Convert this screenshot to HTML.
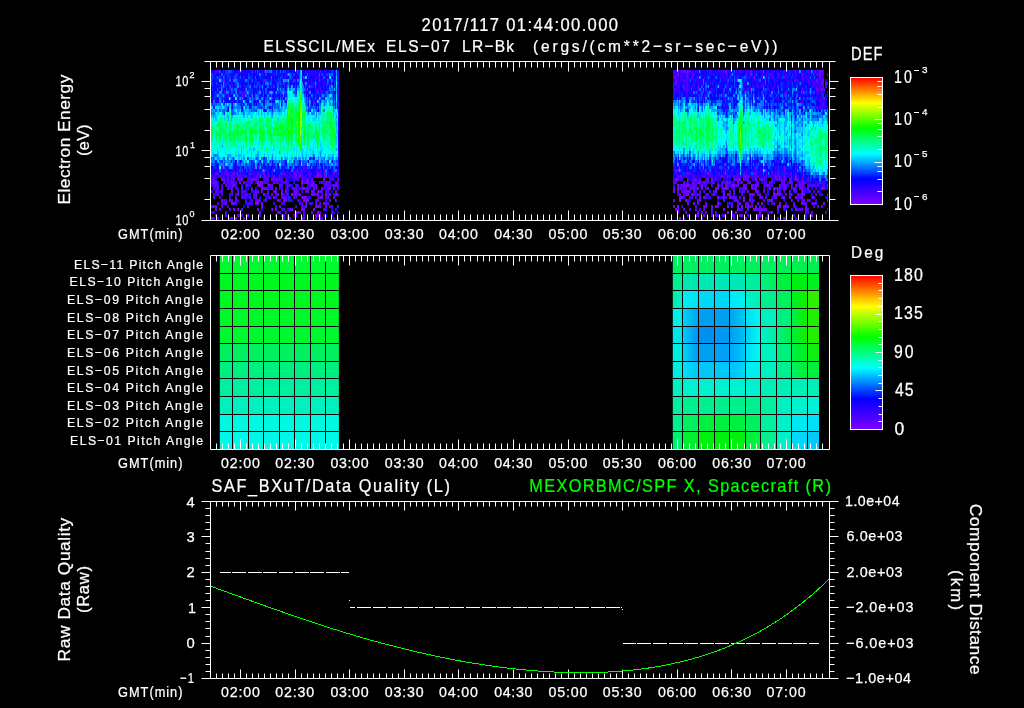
<!DOCTYPE html>
<html><head><meta charset="utf-8"><style>
html,body{margin:0;padding:0;background:#000;}
#w{position:relative;width:1024px;height:708px;overflow:hidden;background:#000;}
.fb{position:absolute;}
</style></head><body><div id="w">
<div class="fb" style="left:211px;top:70px;width:128px;height:150px;background:linear-gradient(rgb(16,24,255) 2.0%,rgb(12,32,255) 6.0%,rgb(11,36,253) 10.0%,rgb(9,53,252) 14.0%,rgb(8,73,246) 18.0%,rgb(8,100,242) 22.0%,rgb(3,146,228) 26.0%,rgb(3,211,204) 30.0%,rgb(2,246,163) 34.0%,rgb(3,252,114) 38.0%,rgb(4,252,82) 42.0%,rgb(2,251,112) 46.0%,rgb(1,250,171) 50.0%,rgb(0,244,211) 54.0%,rgb(0,222,245) 58.0%,rgb(0,111,253) 62.0%,rgb(12,41,254) 66.0%,rgb(51,4,255) 70.0%,rgb(57,0,183) 74.0%,rgb(55,0,171) 78.0%,rgb(47,0,143) 82.0%,rgb(44,0,139) 86.0%,rgb(36,0,107) 90.0%,rgb(33,0,87) 94.0%,rgb(28,0,79) 98.0%)"></div><div class="fb" style="left:673px;top:70px;width:155px;height:150px;background:linear-gradient(rgb(42,7,248) 2.0%,rgb(31,16,248) 6.0%,rgb(28,14,253) 10.0%,rgb(24,25,250) 14.0%,rgb(12,35,253) 18.0%,rgb(6,60,253) 22.0%,rgb(5,102,251) 26.0%,rgb(0,174,234) 30.0%,rgb(0,214,207) 34.0%,rgb(0,236,188) 38.0%,rgb(0,242,167) 42.0%,rgb(0,248,168) 46.0%,rgb(0,242,184) 50.0%,rgb(0,229,215) 54.0%,rgb(0,161,244) 58.0%,rgb(3,100,246) 62.0%,rgb(14,53,252) 66.0%,rgb(32,27,254) 70.0%,rgb(55,4,212) 74.0%,rgb(65,0,192) 78.0%,rgb(45,0,134) 82.0%,rgb(47,0,133) 86.0%,rgb(35,0,95) 90.0%,rgb(37,0,100) 94.0%,rgb(27,0,72) 98.0%)"></div><canvas id="c" width="1024" height="708" style="position:absolute;left:0;top:0"></canvas><svg width="1024" height="708" style="position:absolute;left:0;top:0" font-family='"Liberation Sans", sans-serif'>
<defs><linearGradient id="pr0" gradientUnits="objectBoundingBox" x1="0" y1="0" x2="1" y2="0"><stop offset="0.0103" stop-color="#00f060"/><stop offset="0.0554" stop-color="#00f060"/><stop offset="0.0759" stop-color="#00f060"/><stop offset="0.1635" stop-color="#00f060"/><stop offset="0.1840" stop-color="#00f060"/><stop offset="0.2736" stop-color="#00f060"/><stop offset="0.2941" stop-color="#00f060"/><stop offset="0.3769" stop-color="#00f060"/><stop offset="0.3974" stop-color="#00f060"/><stop offset="0.4870" stop-color="#00f060"/><stop offset="0.5075" stop-color="#00f060"/><stop offset="0.5889" stop-color="#00f060"/><stop offset="0.6094" stop-color="#00f060"/><stop offset="0.6970" stop-color="#00f060"/><stop offset="0.7175" stop-color="#00f058"/><stop offset="0.8016" stop-color="#00f058"/><stop offset="0.8222" stop-color="#00f050"/><stop offset="0.9104" stop-color="#00f050"/><stop offset="0.9309" stop-color="#00f050"/><stop offset="0.9897" stop-color="#00f050"/></linearGradient><linearGradient id="pr1" gradientUnits="objectBoundingBox" x1="0" y1="0" x2="1" y2="0"><stop offset="0.0103" stop-color="#00f090"/><stop offset="0.0554" stop-color="#00f090"/><stop offset="0.0759" stop-color="#00e8b0"/><stop offset="0.1635" stop-color="#00e8b0"/><stop offset="0.1840" stop-color="#00e8b8"/><stop offset="0.2736" stop-color="#00e8b8"/><stop offset="0.2941" stop-color="#00e8b8"/><stop offset="0.3769" stop-color="#00e8b8"/><stop offset="0.3974" stop-color="#00e8b8"/><stop offset="0.4870" stop-color="#00e8b8"/><stop offset="0.5075" stop-color="#00f0a0"/><stop offset="0.5889" stop-color="#00f0a0"/><stop offset="0.6094" stop-color="#00f080"/><stop offset="0.6970" stop-color="#00f060"/><stop offset="0.7175" stop-color="#00f040"/><stop offset="0.8016" stop-color="#00f040"/><stop offset="0.8222" stop-color="#00f010"/><stop offset="0.9104" stop-color="#00f010"/><stop offset="0.9309" stop-color="#00f020"/><stop offset="0.9897" stop-color="#00f020"/></linearGradient><linearGradient id="pr2" gradientUnits="objectBoundingBox" x1="0" y1="0" x2="1" y2="0"><stop offset="0.0103" stop-color="#00f0a0"/><stop offset="0.0554" stop-color="#00f0d0"/><stop offset="0.0759" stop-color="#00f0f0"/><stop offset="0.1635" stop-color="#00e0f8"/><stop offset="0.1840" stop-color="#00d8f8"/><stop offset="0.2736" stop-color="#00d8f8"/><stop offset="0.2941" stop-color="#00d8f8"/><stop offset="0.3769" stop-color="#00d8f8"/><stop offset="0.3974" stop-color="#00e8f8"/><stop offset="0.4870" stop-color="#00f0f0"/><stop offset="0.5075" stop-color="#00f0d0"/><stop offset="0.5889" stop-color="#00f0b0"/><stop offset="0.6094" stop-color="#00f090"/><stop offset="0.6970" stop-color="#00f090"/><stop offset="0.7175" stop-color="#00f060"/><stop offset="0.8016" stop-color="#00f060"/><stop offset="0.8222" stop-color="#00f020"/><stop offset="0.9104" stop-color="#10f000"/><stop offset="0.9309" stop-color="#30f000"/><stop offset="0.9897" stop-color="#30f000"/></linearGradient><linearGradient id="pr3" gradientUnits="objectBoundingBox" x1="0" y1="0" x2="1" y2="0"><stop offset="0.0103" stop-color="#00f0e0"/><stop offset="0.0554" stop-color="#00f0f0"/><stop offset="0.0759" stop-color="#00d0f8"/><stop offset="0.1635" stop-color="#00a8f0"/><stop offset="0.1840" stop-color="#00a0f0"/><stop offset="0.2736" stop-color="#00a0f0"/><stop offset="0.2941" stop-color="#00a0f0"/><stop offset="0.3769" stop-color="#00a0f0"/><stop offset="0.3974" stop-color="#00a8f0"/><stop offset="0.4870" stop-color="#00c8f0"/><stop offset="0.5075" stop-color="#00e0f0"/><stop offset="0.5889" stop-color="#00f8f0"/><stop offset="0.6094" stop-color="#00f0c0"/><stop offset="0.6970" stop-color="#00f0c0"/><stop offset="0.7175" stop-color="#00f080"/><stop offset="0.8016" stop-color="#00f080"/><stop offset="0.8222" stop-color="#00f040"/><stop offset="0.9104" stop-color="#10f000"/><stop offset="0.9309" stop-color="#20f000"/><stop offset="0.9897" stop-color="#20f000"/></linearGradient><linearGradient id="pr4" gradientUnits="objectBoundingBox" x1="0" y1="0" x2="1" y2="0"><stop offset="0.0103" stop-color="#00e8e8"/><stop offset="0.0554" stop-color="#00e8e8"/><stop offset="0.0759" stop-color="#00c8f8"/><stop offset="0.1635" stop-color="#0098f0"/><stop offset="0.1840" stop-color="#0090f0"/><stop offset="0.2736" stop-color="#0090f0"/><stop offset="0.2941" stop-color="#0098f0"/><stop offset="0.3769" stop-color="#0098f0"/><stop offset="0.3974" stop-color="#00a0f0"/><stop offset="0.4870" stop-color="#00c0f0"/><stop offset="0.5075" stop-color="#00d0f0"/><stop offset="0.5889" stop-color="#00f8f0"/><stop offset="0.6094" stop-color="#00f0d0"/><stop offset="0.6970" stop-color="#00f0a0"/><stop offset="0.7175" stop-color="#00f080"/><stop offset="0.8016" stop-color="#00f050"/><stop offset="0.8222" stop-color="#00f030"/><stop offset="0.9104" stop-color="#10f000"/><stop offset="0.9309" stop-color="#20f000"/><stop offset="0.9897" stop-color="#20f000"/></linearGradient><linearGradient id="pr5" gradientUnits="objectBoundingBox" x1="0" y1="0" x2="1" y2="0"><stop offset="0.0103" stop-color="#00f0e0"/><stop offset="0.0554" stop-color="#00f0e0"/><stop offset="0.0759" stop-color="#00d0f8"/><stop offset="0.1635" stop-color="#00a0f0"/><stop offset="0.1840" stop-color="#00a0f0"/><stop offset="0.2736" stop-color="#00a0f0"/><stop offset="0.2941" stop-color="#00a0f8"/><stop offset="0.3769" stop-color="#00a0f8"/><stop offset="0.3974" stop-color="#00a8f8"/><stop offset="0.4870" stop-color="#00c8f8"/><stop offset="0.5075" stop-color="#00e0f8"/><stop offset="0.5889" stop-color="#00f8f0"/><stop offset="0.6094" stop-color="#00f0c0"/><stop offset="0.6970" stop-color="#00f0c0"/><stop offset="0.7175" stop-color="#00f080"/><stop offset="0.8016" stop-color="#00f080"/><stop offset="0.8222" stop-color="#00f040"/><stop offset="0.9104" stop-color="#00f020"/><stop offset="0.9309" stop-color="#10f010"/><stop offset="0.9897" stop-color="#10f010"/></linearGradient><linearGradient id="pr6" gradientUnits="objectBoundingBox" x1="0" y1="0" x2="1" y2="0"><stop offset="0.0103" stop-color="#00f0e0"/><stop offset="0.0554" stop-color="#00f0e0"/><stop offset="0.0759" stop-color="#00e0f8"/><stop offset="0.1635" stop-color="#00c8f8"/><stop offset="0.1840" stop-color="#00c8f8"/><stop offset="0.2736" stop-color="#00c8f8"/><stop offset="0.2941" stop-color="#00c8f8"/><stop offset="0.3769" stop-color="#00c8f8"/><stop offset="0.3974" stop-color="#00c0f8"/><stop offset="0.4870" stop-color="#00d8f8"/><stop offset="0.5075" stop-color="#00f0f0"/><stop offset="0.5889" stop-color="#00f0f0"/><stop offset="0.6094" stop-color="#00f0c0"/><stop offset="0.6970" stop-color="#00f0c0"/><stop offset="0.7175" stop-color="#00f090"/><stop offset="0.8016" stop-color="#00f090"/><stop offset="0.8222" stop-color="#00f060"/><stop offset="0.9104" stop-color="#00f030"/><stop offset="0.9309" stop-color="#00f040"/><stop offset="0.9897" stop-color="#00f040"/></linearGradient><linearGradient id="pr7" gradientUnits="objectBoundingBox" x1="0" y1="0" x2="1" y2="0"><stop offset="0.0103" stop-color="#00f0c0"/><stop offset="0.0554" stop-color="#00f0c0"/><stop offset="0.0759" stop-color="#00f0d0"/><stop offset="0.1635" stop-color="#00f0d0"/><stop offset="0.1840" stop-color="#00f0d0"/><stop offset="0.2736" stop-color="#00f0d0"/><stop offset="0.2941" stop-color="#00f0d0"/><stop offset="0.3769" stop-color="#00f0d0"/><stop offset="0.3974" stop-color="#00f0d0"/><stop offset="0.4870" stop-color="#00f0d0"/><stop offset="0.5075" stop-color="#00f0d0"/><stop offset="0.5889" stop-color="#00f0d0"/><stop offset="0.6094" stop-color="#00f0b8"/><stop offset="0.6970" stop-color="#00f0b8"/><stop offset="0.7175" stop-color="#00f0b8"/><stop offset="0.8016" stop-color="#00f0b8"/><stop offset="0.8222" stop-color="#00f0b8"/><stop offset="0.9104" stop-color="#00f0b8"/><stop offset="0.9309" stop-color="#00f0b8"/><stop offset="0.9897" stop-color="#00f0b8"/></linearGradient><linearGradient id="pr8" gradientUnits="objectBoundingBox" x1="0" y1="0" x2="1" y2="0"><stop offset="0.0103" stop-color="#00f0a0"/><stop offset="0.0554" stop-color="#00f0a0"/><stop offset="0.0759" stop-color="#00f090"/><stop offset="0.1635" stop-color="#00f090"/><stop offset="0.1840" stop-color="#00f090"/><stop offset="0.2736" stop-color="#00f090"/><stop offset="0.2941" stop-color="#00f090"/><stop offset="0.3769" stop-color="#00f090"/><stop offset="0.3974" stop-color="#00f090"/><stop offset="0.4870" stop-color="#00f090"/><stop offset="0.5075" stop-color="#00f090"/><stop offset="0.5889" stop-color="#00f090"/><stop offset="0.6094" stop-color="#00f0a0"/><stop offset="0.6970" stop-color="#00f0a0"/><stop offset="0.7175" stop-color="#00f0c0"/><stop offset="0.8016" stop-color="#00f0c0"/><stop offset="0.8222" stop-color="#00f0d0"/><stop offset="0.9104" stop-color="#00f0d0"/><stop offset="0.9309" stop-color="#00f0d8"/><stop offset="0.9897" stop-color="#00f0d8"/></linearGradient><linearGradient id="pr9" gradientUnits="objectBoundingBox" x1="0" y1="0" x2="1" y2="0"><stop offset="0.0103" stop-color="#00f090"/><stop offset="0.0554" stop-color="#00f090"/><stop offset="0.0759" stop-color="#00f060"/><stop offset="0.1635" stop-color="#00f060"/><stop offset="0.1840" stop-color="#00f040"/><stop offset="0.2736" stop-color="#00f040"/><stop offset="0.2941" stop-color="#00f040"/><stop offset="0.3769" stop-color="#00f040"/><stop offset="0.3974" stop-color="#00f040"/><stop offset="0.4870" stop-color="#00f040"/><stop offset="0.5075" stop-color="#00f060"/><stop offset="0.5889" stop-color="#00f060"/><stop offset="0.6094" stop-color="#00f0a0"/><stop offset="0.6970" stop-color="#00f0a0"/><stop offset="0.7175" stop-color="#00f0c8"/><stop offset="0.8016" stop-color="#00f0c8"/><stop offset="0.8222" stop-color="#00e8f0"/><stop offset="0.9104" stop-color="#00e8f0"/><stop offset="0.9309" stop-color="#00e0f8"/><stop offset="0.9897" stop-color="#00e0f8"/></linearGradient><linearGradient id="pr10" gradientUnits="objectBoundingBox" x1="0" y1="0" x2="1" y2="0"><stop offset="0.0103" stop-color="#00f070"/><stop offset="0.0554" stop-color="#00f070"/><stop offset="0.0759" stop-color="#00f030"/><stop offset="0.1635" stop-color="#00f030"/><stop offset="0.1840" stop-color="#00f010"/><stop offset="0.2736" stop-color="#00f010"/><stop offset="0.2941" stop-color="#00f010"/><stop offset="0.3769" stop-color="#00f010"/><stop offset="0.3974" stop-color="#00f010"/><stop offset="0.4870" stop-color="#00f010"/><stop offset="0.5075" stop-color="#00f040"/><stop offset="0.5889" stop-color="#00f040"/><stop offset="0.6094" stop-color="#00f090"/><stop offset="0.6970" stop-color="#00f090"/><stop offset="0.7175" stop-color="#00f0c8"/><stop offset="0.8016" stop-color="#00f0c8"/><stop offset="0.8222" stop-color="#00d8f8"/><stop offset="0.9104" stop-color="#00d8f8"/><stop offset="0.9309" stop-color="#00c8f8"/><stop offset="0.9897" stop-color="#00c8f8"/></linearGradient></defs><rect x="219.8" y="255.50" width="119.1" height="17.64" fill="#00fa30"/><rect x="672.8" y="255.50" width="146.2" height="17.64" fill="url(#pr0)"/><rect x="219.8" y="273.14" width="119.1" height="17.64" fill="#00f820"/><rect x="672.8" y="273.14" width="146.2" height="17.64" fill="url(#pr1)"/><rect x="219.8" y="290.77" width="119.1" height="17.64" fill="#00f820"/><rect x="672.8" y="290.77" width="146.2" height="17.64" fill="url(#pr2)"/><rect x="219.8" y="308.41" width="119.1" height="17.64" fill="#00f828"/><rect x="672.8" y="308.41" width="146.2" height="17.64" fill="url(#pr3)"/><rect x="219.8" y="326.05" width="119.1" height="17.64" fill="#00f830"/><rect x="672.8" y="326.05" width="146.2" height="17.64" fill="url(#pr4)"/><rect x="219.8" y="343.68" width="119.1" height="17.64" fill="#00f060"/><rect x="672.8" y="343.68" width="146.2" height="17.64" fill="url(#pr5)"/><rect x="219.8" y="361.32" width="119.1" height="17.64" fill="#00f080"/><rect x="672.8" y="361.32" width="146.2" height="17.64" fill="url(#pr6)"/><rect x="219.8" y="378.95" width="119.1" height="17.64" fill="#00f0a0"/><rect x="672.8" y="378.95" width="146.2" height="17.64" fill="url(#pr7)"/><rect x="219.8" y="396.59" width="119.1" height="17.64" fill="#00f0c0"/><rect x="672.8" y="396.59" width="146.2" height="17.64" fill="url(#pr8)"/><rect x="219.8" y="414.23" width="119.1" height="17.64" fill="#00f8e0"/><rect x="672.8" y="414.23" width="146.2" height="17.64" fill="url(#pr9)"/><rect x="219.8" y="431.86" width="119.1" height="17.64" fill="#00f8e8"/><rect x="672.8" y="431.86" width="146.2" height="17.64" fill="url(#pr10)"/><line x1="232.5" y1="255.5" x2="232.5" y2="449.5" stroke="#000"/><line x1="248.5" y1="255.5" x2="248.5" y2="449.5" stroke="#000"/><line x1="263.5" y1="255.5" x2="263.5" y2="449.5" stroke="#000"/><line x1="279.5" y1="255.5" x2="279.5" y2="449.5" stroke="#000"/><line x1="294.5" y1="255.5" x2="294.5" y2="449.5" stroke="#000"/><line x1="310.5" y1="255.5" x2="310.5" y2="449.5" stroke="#000"/><line x1="325.5" y1="255.5" x2="325.5" y2="449.5" stroke="#000"/><line x1="682.5" y1="255.5" x2="682.5" y2="449.5" stroke="#000"/><line x1="698.5" y1="255.5" x2="698.5" y2="449.5" stroke="#000"/><line x1="714.5" y1="255.5" x2="714.5" y2="449.5" stroke="#000"/><line x1="729.5" y1="255.5" x2="729.5" y2="449.5" stroke="#000"/><line x1="745.5" y1="255.5" x2="745.5" y2="449.5" stroke="#000"/><line x1="760.5" y1="255.5" x2="760.5" y2="449.5" stroke="#000"/><line x1="776.5" y1="255.5" x2="776.5" y2="449.5" stroke="#000"/><line x1="791.5" y1="255.5" x2="791.5" y2="449.5" stroke="#000"/><line x1="807.5" y1="255.5" x2="807.5" y2="449.5" stroke="#000"/><line x1="219.8" y1="273.5" x2="338.9" y2="273.5" stroke="#000"/><line x1="672.8" y1="273.5" x2="819" y2="273.5" stroke="#000"/><line x1="219.8" y1="290.5" x2="338.9" y2="290.5" stroke="#000"/><line x1="672.8" y1="290.5" x2="819" y2="290.5" stroke="#000"/><line x1="219.8" y1="308.5" x2="338.9" y2="308.5" stroke="#000"/><line x1="672.8" y1="308.5" x2="819" y2="308.5" stroke="#000"/><line x1="219.8" y1="326.5" x2="338.9" y2="326.5" stroke="#000"/><line x1="672.8" y1="326.5" x2="819" y2="326.5" stroke="#000"/><line x1="219.8" y1="343.5" x2="338.9" y2="343.5" stroke="#000"/><line x1="672.8" y1="343.5" x2="819" y2="343.5" stroke="#000"/><line x1="219.8" y1="361.5" x2="338.9" y2="361.5" stroke="#000"/><line x1="672.8" y1="361.5" x2="819" y2="361.5" stroke="#000"/><line x1="219.8" y1="378.5" x2="338.9" y2="378.5" stroke="#000"/><line x1="672.8" y1="378.5" x2="819" y2="378.5" stroke="#000"/><line x1="219.8" y1="396.5" x2="338.9" y2="396.5" stroke="#000"/><line x1="672.8" y1="396.5" x2="819" y2="396.5" stroke="#000"/><line x1="219.8" y1="414.5" x2="338.9" y2="414.5" stroke="#000"/><line x1="672.8" y1="414.5" x2="819" y2="414.5" stroke="#000"/><line x1="219.8" y1="431.5" x2="338.9" y2="431.5" stroke="#000"/><line x1="672.8" y1="431.5" x2="819" y2="431.5" stroke="#000"/>
<line x1="210.5" y1="61.5" x2="829.5" y2="61.5" stroke="#ffffff" stroke-width="1"/>
<line x1="210.5" y1="220.5" x2="829.5" y2="220.5" stroke="#ffffff" stroke-width="1"/>
<line x1="210.5" y1="61.5" x2="210.5" y2="220.5" stroke="#ffffff" stroke-width="1"/>
<line x1="829.5" y1="61.5" x2="829.5" y2="220.5" stroke="#ffffff" stroke-width="1"/>
<line x1="216.5" y1="61.5" x2="216.5" y2="67.5" stroke="#ffffff" stroke-width="1"/>
<line x1="216.5" y1="220.5" x2="216.5" y2="214.5" stroke="#ffffff" stroke-width="1"/>
<line x1="222.5" y1="61.5" x2="222.5" y2="67.5" stroke="#ffffff" stroke-width="1"/>
<line x1="222.5" y1="220.5" x2="222.5" y2="214.5" stroke="#ffffff" stroke-width="1"/>
<line x1="228.5" y1="61.5" x2="228.5" y2="67.5" stroke="#ffffff" stroke-width="1"/>
<line x1="228.5" y1="220.5" x2="228.5" y2="214.5" stroke="#ffffff" stroke-width="1"/>
<line x1="234.5" y1="61.5" x2="234.5" y2="67.5" stroke="#ffffff" stroke-width="1"/>
<line x1="234.5" y1="220.5" x2="234.5" y2="214.5" stroke="#ffffff" stroke-width="1"/>
<line x1="240.5" y1="61.5" x2="240.5" y2="71.5" stroke="#ffffff" stroke-width="1"/>
<line x1="240.5" y1="220.5" x2="240.5" y2="210.5" stroke="#ffffff" stroke-width="1"/>
<line x1="246.5" y1="61.5" x2="246.5" y2="67.5" stroke="#ffffff" stroke-width="1"/>
<line x1="246.5" y1="220.5" x2="246.5" y2="214.5" stroke="#ffffff" stroke-width="1"/>
<line x1="252.5" y1="61.5" x2="252.5" y2="67.5" stroke="#ffffff" stroke-width="1"/>
<line x1="252.5" y1="220.5" x2="252.5" y2="214.5" stroke="#ffffff" stroke-width="1"/>
<line x1="258.5" y1="61.5" x2="258.5" y2="67.5" stroke="#ffffff" stroke-width="1"/>
<line x1="258.5" y1="220.5" x2="258.5" y2="214.5" stroke="#ffffff" stroke-width="1"/>
<line x1="264.5" y1="61.5" x2="264.5" y2="67.5" stroke="#ffffff" stroke-width="1"/>
<line x1="264.5" y1="220.5" x2="264.5" y2="214.5" stroke="#ffffff" stroke-width="1"/>
<line x1="270.5" y1="61.5" x2="270.5" y2="67.5" stroke="#ffffff" stroke-width="1"/>
<line x1="270.5" y1="220.5" x2="270.5" y2="214.5" stroke="#ffffff" stroke-width="1"/>
<line x1="276.5" y1="61.5" x2="276.5" y2="67.5" stroke="#ffffff" stroke-width="1"/>
<line x1="276.5" y1="220.5" x2="276.5" y2="214.5" stroke="#ffffff" stroke-width="1"/>
<line x1="282.5" y1="61.5" x2="282.5" y2="67.5" stroke="#ffffff" stroke-width="1"/>
<line x1="282.5" y1="220.5" x2="282.5" y2="214.5" stroke="#ffffff" stroke-width="1"/>
<line x1="288.5" y1="61.5" x2="288.5" y2="67.5" stroke="#ffffff" stroke-width="1"/>
<line x1="288.5" y1="220.5" x2="288.5" y2="214.5" stroke="#ffffff" stroke-width="1"/>
<line x1="295.5" y1="61.5" x2="295.5" y2="71.5" stroke="#ffffff" stroke-width="1"/>
<line x1="295.5" y1="220.5" x2="295.5" y2="210.5" stroke="#ffffff" stroke-width="1"/>
<line x1="301.5" y1="61.5" x2="301.5" y2="67.5" stroke="#ffffff" stroke-width="1"/>
<line x1="301.5" y1="220.5" x2="301.5" y2="214.5" stroke="#ffffff" stroke-width="1"/>
<line x1="307.5" y1="61.5" x2="307.5" y2="67.5" stroke="#ffffff" stroke-width="1"/>
<line x1="307.5" y1="220.5" x2="307.5" y2="214.5" stroke="#ffffff" stroke-width="1"/>
<line x1="313.5" y1="61.5" x2="313.5" y2="67.5" stroke="#ffffff" stroke-width="1"/>
<line x1="313.5" y1="220.5" x2="313.5" y2="214.5" stroke="#ffffff" stroke-width="1"/>
<line x1="319.5" y1="61.5" x2="319.5" y2="67.5" stroke="#ffffff" stroke-width="1"/>
<line x1="319.5" y1="220.5" x2="319.5" y2="214.5" stroke="#ffffff" stroke-width="1"/>
<line x1="325.5" y1="61.5" x2="325.5" y2="67.5" stroke="#ffffff" stroke-width="1"/>
<line x1="325.5" y1="220.5" x2="325.5" y2="214.5" stroke="#ffffff" stroke-width="1"/>
<line x1="331.5" y1="61.5" x2="331.5" y2="67.5" stroke="#ffffff" stroke-width="1"/>
<line x1="331.5" y1="220.5" x2="331.5" y2="214.5" stroke="#ffffff" stroke-width="1"/>
<line x1="337.5" y1="61.5" x2="337.5" y2="67.5" stroke="#ffffff" stroke-width="1"/>
<line x1="337.5" y1="220.5" x2="337.5" y2="214.5" stroke="#ffffff" stroke-width="1"/>
<line x1="343.5" y1="61.5" x2="343.5" y2="67.5" stroke="#ffffff" stroke-width="1"/>
<line x1="343.5" y1="220.5" x2="343.5" y2="214.5" stroke="#ffffff" stroke-width="1"/>
<line x1="349.5" y1="61.5" x2="349.5" y2="71.5" stroke="#ffffff" stroke-width="1"/>
<line x1="349.5" y1="220.5" x2="349.5" y2="210.5" stroke="#ffffff" stroke-width="1"/>
<line x1="355.5" y1="61.5" x2="355.5" y2="67.5" stroke="#ffffff" stroke-width="1"/>
<line x1="355.5" y1="220.5" x2="355.5" y2="214.5" stroke="#ffffff" stroke-width="1"/>
<line x1="361.5" y1="61.5" x2="361.5" y2="67.5" stroke="#ffffff" stroke-width="1"/>
<line x1="361.5" y1="220.5" x2="361.5" y2="214.5" stroke="#ffffff" stroke-width="1"/>
<line x1="367.5" y1="61.5" x2="367.5" y2="67.5" stroke="#ffffff" stroke-width="1"/>
<line x1="367.5" y1="220.5" x2="367.5" y2="214.5" stroke="#ffffff" stroke-width="1"/>
<line x1="373.5" y1="61.5" x2="373.5" y2="67.5" stroke="#ffffff" stroke-width="1"/>
<line x1="373.5" y1="220.5" x2="373.5" y2="214.5" stroke="#ffffff" stroke-width="1"/>
<line x1="379.5" y1="61.5" x2="379.5" y2="67.5" stroke="#ffffff" stroke-width="1"/>
<line x1="379.5" y1="220.5" x2="379.5" y2="214.5" stroke="#ffffff" stroke-width="1"/>
<line x1="386.5" y1="61.5" x2="386.5" y2="67.5" stroke="#ffffff" stroke-width="1"/>
<line x1="386.5" y1="220.5" x2="386.5" y2="214.5" stroke="#ffffff" stroke-width="1"/>
<line x1="392.5" y1="61.5" x2="392.5" y2="67.5" stroke="#ffffff" stroke-width="1"/>
<line x1="392.5" y1="220.5" x2="392.5" y2="214.5" stroke="#ffffff" stroke-width="1"/>
<line x1="398.5" y1="61.5" x2="398.5" y2="67.5" stroke="#ffffff" stroke-width="1"/>
<line x1="398.5" y1="220.5" x2="398.5" y2="214.5" stroke="#ffffff" stroke-width="1"/>
<line x1="404.5" y1="61.5" x2="404.5" y2="71.5" stroke="#ffffff" stroke-width="1"/>
<line x1="404.5" y1="220.5" x2="404.5" y2="210.5" stroke="#ffffff" stroke-width="1"/>
<line x1="410.5" y1="61.5" x2="410.5" y2="67.5" stroke="#ffffff" stroke-width="1"/>
<line x1="410.5" y1="220.5" x2="410.5" y2="214.5" stroke="#ffffff" stroke-width="1"/>
<line x1="416.5" y1="61.5" x2="416.5" y2="67.5" stroke="#ffffff" stroke-width="1"/>
<line x1="416.5" y1="220.5" x2="416.5" y2="214.5" stroke="#ffffff" stroke-width="1"/>
<line x1="422.5" y1="61.5" x2="422.5" y2="67.5" stroke="#ffffff" stroke-width="1"/>
<line x1="422.5" y1="220.5" x2="422.5" y2="214.5" stroke="#ffffff" stroke-width="1"/>
<line x1="428.5" y1="61.5" x2="428.5" y2="67.5" stroke="#ffffff" stroke-width="1"/>
<line x1="428.5" y1="220.5" x2="428.5" y2="214.5" stroke="#ffffff" stroke-width="1"/>
<line x1="434.5" y1="61.5" x2="434.5" y2="67.5" stroke="#ffffff" stroke-width="1"/>
<line x1="434.5" y1="220.5" x2="434.5" y2="214.5" stroke="#ffffff" stroke-width="1"/>
<line x1="440.5" y1="61.5" x2="440.5" y2="67.5" stroke="#ffffff" stroke-width="1"/>
<line x1="440.5" y1="220.5" x2="440.5" y2="214.5" stroke="#ffffff" stroke-width="1"/>
<line x1="446.5" y1="61.5" x2="446.5" y2="67.5" stroke="#ffffff" stroke-width="1"/>
<line x1="446.5" y1="220.5" x2="446.5" y2="214.5" stroke="#ffffff" stroke-width="1"/>
<line x1="452.5" y1="61.5" x2="452.5" y2="67.5" stroke="#ffffff" stroke-width="1"/>
<line x1="452.5" y1="220.5" x2="452.5" y2="214.5" stroke="#ffffff" stroke-width="1"/>
<line x1="458.5" y1="61.5" x2="458.5" y2="71.5" stroke="#ffffff" stroke-width="1"/>
<line x1="458.5" y1="220.5" x2="458.5" y2="210.5" stroke="#ffffff" stroke-width="1"/>
<line x1="464.5" y1="61.5" x2="464.5" y2="67.5" stroke="#ffffff" stroke-width="1"/>
<line x1="464.5" y1="220.5" x2="464.5" y2="214.5" stroke="#ffffff" stroke-width="1"/>
<line x1="470.5" y1="61.5" x2="470.5" y2="67.5" stroke="#ffffff" stroke-width="1"/>
<line x1="470.5" y1="220.5" x2="470.5" y2="214.5" stroke="#ffffff" stroke-width="1"/>
<line x1="477.5" y1="61.5" x2="477.5" y2="67.5" stroke="#ffffff" stroke-width="1"/>
<line x1="477.5" y1="220.5" x2="477.5" y2="214.5" stroke="#ffffff" stroke-width="1"/>
<line x1="483.5" y1="61.5" x2="483.5" y2="67.5" stroke="#ffffff" stroke-width="1"/>
<line x1="483.5" y1="220.5" x2="483.5" y2="214.5" stroke="#ffffff" stroke-width="1"/>
<line x1="489.5" y1="61.5" x2="489.5" y2="67.5" stroke="#ffffff" stroke-width="1"/>
<line x1="489.5" y1="220.5" x2="489.5" y2="214.5" stroke="#ffffff" stroke-width="1"/>
<line x1="495.5" y1="61.5" x2="495.5" y2="67.5" stroke="#ffffff" stroke-width="1"/>
<line x1="495.5" y1="220.5" x2="495.5" y2="214.5" stroke="#ffffff" stroke-width="1"/>
<line x1="501.5" y1="61.5" x2="501.5" y2="67.5" stroke="#ffffff" stroke-width="1"/>
<line x1="501.5" y1="220.5" x2="501.5" y2="214.5" stroke="#ffffff" stroke-width="1"/>
<line x1="507.5" y1="61.5" x2="507.5" y2="67.5" stroke="#ffffff" stroke-width="1"/>
<line x1="507.5" y1="220.5" x2="507.5" y2="214.5" stroke="#ffffff" stroke-width="1"/>
<line x1="513.5" y1="61.5" x2="513.5" y2="71.5" stroke="#ffffff" stroke-width="1"/>
<line x1="513.5" y1="220.5" x2="513.5" y2="210.5" stroke="#ffffff" stroke-width="1"/>
<line x1="519.5" y1="61.5" x2="519.5" y2="67.5" stroke="#ffffff" stroke-width="1"/>
<line x1="519.5" y1="220.5" x2="519.5" y2="214.5" stroke="#ffffff" stroke-width="1"/>
<line x1="525.5" y1="61.5" x2="525.5" y2="67.5" stroke="#ffffff" stroke-width="1"/>
<line x1="525.5" y1="220.5" x2="525.5" y2="214.5" stroke="#ffffff" stroke-width="1"/>
<line x1="531.5" y1="61.5" x2="531.5" y2="67.5" stroke="#ffffff" stroke-width="1"/>
<line x1="531.5" y1="220.5" x2="531.5" y2="214.5" stroke="#ffffff" stroke-width="1"/>
<line x1="537.5" y1="61.5" x2="537.5" y2="67.5" stroke="#ffffff" stroke-width="1"/>
<line x1="537.5" y1="220.5" x2="537.5" y2="214.5" stroke="#ffffff" stroke-width="1"/>
<line x1="543.5" y1="61.5" x2="543.5" y2="67.5" stroke="#ffffff" stroke-width="1"/>
<line x1="543.5" y1="220.5" x2="543.5" y2="214.5" stroke="#ffffff" stroke-width="1"/>
<line x1="549.5" y1="61.5" x2="549.5" y2="67.5" stroke="#ffffff" stroke-width="1"/>
<line x1="549.5" y1="220.5" x2="549.5" y2="214.5" stroke="#ffffff" stroke-width="1"/>
<line x1="555.5" y1="61.5" x2="555.5" y2="67.5" stroke="#ffffff" stroke-width="1"/>
<line x1="555.5" y1="220.5" x2="555.5" y2="214.5" stroke="#ffffff" stroke-width="1"/>
<line x1="561.5" y1="61.5" x2="561.5" y2="67.5" stroke="#ffffff" stroke-width="1"/>
<line x1="561.5" y1="220.5" x2="561.5" y2="214.5" stroke="#ffffff" stroke-width="1"/>
<line x1="568.5" y1="61.5" x2="568.5" y2="71.5" stroke="#ffffff" stroke-width="1"/>
<line x1="568.5" y1="220.5" x2="568.5" y2="210.5" stroke="#ffffff" stroke-width="1"/>
<line x1="574.5" y1="61.5" x2="574.5" y2="67.5" stroke="#ffffff" stroke-width="1"/>
<line x1="574.5" y1="220.5" x2="574.5" y2="214.5" stroke="#ffffff" stroke-width="1"/>
<line x1="580.5" y1="61.5" x2="580.5" y2="67.5" stroke="#ffffff" stroke-width="1"/>
<line x1="580.5" y1="220.5" x2="580.5" y2="214.5" stroke="#ffffff" stroke-width="1"/>
<line x1="586.5" y1="61.5" x2="586.5" y2="67.5" stroke="#ffffff" stroke-width="1"/>
<line x1="586.5" y1="220.5" x2="586.5" y2="214.5" stroke="#ffffff" stroke-width="1"/>
<line x1="592.5" y1="61.5" x2="592.5" y2="67.5" stroke="#ffffff" stroke-width="1"/>
<line x1="592.5" y1="220.5" x2="592.5" y2="214.5" stroke="#ffffff" stroke-width="1"/>
<line x1="598.5" y1="61.5" x2="598.5" y2="67.5" stroke="#ffffff" stroke-width="1"/>
<line x1="598.5" y1="220.5" x2="598.5" y2="214.5" stroke="#ffffff" stroke-width="1"/>
<line x1="604.5" y1="61.5" x2="604.5" y2="67.5" stroke="#ffffff" stroke-width="1"/>
<line x1="604.5" y1="220.5" x2="604.5" y2="214.5" stroke="#ffffff" stroke-width="1"/>
<line x1="610.5" y1="61.5" x2="610.5" y2="67.5" stroke="#ffffff" stroke-width="1"/>
<line x1="610.5" y1="220.5" x2="610.5" y2="214.5" stroke="#ffffff" stroke-width="1"/>
<line x1="616.5" y1="61.5" x2="616.5" y2="67.5" stroke="#ffffff" stroke-width="1"/>
<line x1="616.5" y1="220.5" x2="616.5" y2="214.5" stroke="#ffffff" stroke-width="1"/>
<line x1="622.5" y1="61.5" x2="622.5" y2="71.5" stroke="#ffffff" stroke-width="1"/>
<line x1="622.5" y1="220.5" x2="622.5" y2="210.5" stroke="#ffffff" stroke-width="1"/>
<line x1="628.5" y1="61.5" x2="628.5" y2="67.5" stroke="#ffffff" stroke-width="1"/>
<line x1="628.5" y1="220.5" x2="628.5" y2="214.5" stroke="#ffffff" stroke-width="1"/>
<line x1="634.5" y1="61.5" x2="634.5" y2="67.5" stroke="#ffffff" stroke-width="1"/>
<line x1="634.5" y1="220.5" x2="634.5" y2="214.5" stroke="#ffffff" stroke-width="1"/>
<line x1="640.5" y1="61.5" x2="640.5" y2="67.5" stroke="#ffffff" stroke-width="1"/>
<line x1="640.5" y1="220.5" x2="640.5" y2="214.5" stroke="#ffffff" stroke-width="1"/>
<line x1="646.5" y1="61.5" x2="646.5" y2="67.5" stroke="#ffffff" stroke-width="1"/>
<line x1="646.5" y1="220.5" x2="646.5" y2="214.5" stroke="#ffffff" stroke-width="1"/>
<line x1="653.5" y1="61.5" x2="653.5" y2="67.5" stroke="#ffffff" stroke-width="1"/>
<line x1="653.5" y1="220.5" x2="653.5" y2="214.5" stroke="#ffffff" stroke-width="1"/>
<line x1="659.5" y1="61.5" x2="659.5" y2="67.5" stroke="#ffffff" stroke-width="1"/>
<line x1="659.5" y1="220.5" x2="659.5" y2="214.5" stroke="#ffffff" stroke-width="1"/>
<line x1="665.5" y1="61.5" x2="665.5" y2="67.5" stroke="#ffffff" stroke-width="1"/>
<line x1="665.5" y1="220.5" x2="665.5" y2="214.5" stroke="#ffffff" stroke-width="1"/>
<line x1="671.5" y1="61.5" x2="671.5" y2="67.5" stroke="#ffffff" stroke-width="1"/>
<line x1="671.5" y1="220.5" x2="671.5" y2="214.5" stroke="#ffffff" stroke-width="1"/>
<line x1="677.5" y1="61.5" x2="677.5" y2="71.5" stroke="#ffffff" stroke-width="1"/>
<line x1="677.5" y1="220.5" x2="677.5" y2="210.5" stroke="#ffffff" stroke-width="1"/>
<line x1="683.5" y1="61.5" x2="683.5" y2="67.5" stroke="#ffffff" stroke-width="1"/>
<line x1="683.5" y1="220.5" x2="683.5" y2="214.5" stroke="#ffffff" stroke-width="1"/>
<line x1="689.5" y1="61.5" x2="689.5" y2="67.5" stroke="#ffffff" stroke-width="1"/>
<line x1="689.5" y1="220.5" x2="689.5" y2="214.5" stroke="#ffffff" stroke-width="1"/>
<line x1="695.5" y1="61.5" x2="695.5" y2="67.5" stroke="#ffffff" stroke-width="1"/>
<line x1="695.5" y1="220.5" x2="695.5" y2="214.5" stroke="#ffffff" stroke-width="1"/>
<line x1="701.5" y1="61.5" x2="701.5" y2="67.5" stroke="#ffffff" stroke-width="1"/>
<line x1="701.5" y1="220.5" x2="701.5" y2="214.5" stroke="#ffffff" stroke-width="1"/>
<line x1="707.5" y1="61.5" x2="707.5" y2="67.5" stroke="#ffffff" stroke-width="1"/>
<line x1="707.5" y1="220.5" x2="707.5" y2="214.5" stroke="#ffffff" stroke-width="1"/>
<line x1="713.5" y1="61.5" x2="713.5" y2="67.5" stroke="#ffffff" stroke-width="1"/>
<line x1="713.5" y1="220.5" x2="713.5" y2="214.5" stroke="#ffffff" stroke-width="1"/>
<line x1="719.5" y1="61.5" x2="719.5" y2="67.5" stroke="#ffffff" stroke-width="1"/>
<line x1="719.5" y1="220.5" x2="719.5" y2="214.5" stroke="#ffffff" stroke-width="1"/>
<line x1="725.5" y1="61.5" x2="725.5" y2="67.5" stroke="#ffffff" stroke-width="1"/>
<line x1="725.5" y1="220.5" x2="725.5" y2="214.5" stroke="#ffffff" stroke-width="1"/>
<line x1="731.5" y1="61.5" x2="731.5" y2="71.5" stroke="#ffffff" stroke-width="1"/>
<line x1="731.5" y1="220.5" x2="731.5" y2="210.5" stroke="#ffffff" stroke-width="1"/>
<line x1="737.5" y1="61.5" x2="737.5" y2="67.5" stroke="#ffffff" stroke-width="1"/>
<line x1="737.5" y1="220.5" x2="737.5" y2="214.5" stroke="#ffffff" stroke-width="1"/>
<line x1="744.5" y1="61.5" x2="744.5" y2="67.5" stroke="#ffffff" stroke-width="1"/>
<line x1="744.5" y1="220.5" x2="744.5" y2="214.5" stroke="#ffffff" stroke-width="1"/>
<line x1="750.5" y1="61.5" x2="750.5" y2="67.5" stroke="#ffffff" stroke-width="1"/>
<line x1="750.5" y1="220.5" x2="750.5" y2="214.5" stroke="#ffffff" stroke-width="1"/>
<line x1="756.5" y1="61.5" x2="756.5" y2="67.5" stroke="#ffffff" stroke-width="1"/>
<line x1="756.5" y1="220.5" x2="756.5" y2="214.5" stroke="#ffffff" stroke-width="1"/>
<line x1="762.5" y1="61.5" x2="762.5" y2="67.5" stroke="#ffffff" stroke-width="1"/>
<line x1="762.5" y1="220.5" x2="762.5" y2="214.5" stroke="#ffffff" stroke-width="1"/>
<line x1="768.5" y1="61.5" x2="768.5" y2="67.5" stroke="#ffffff" stroke-width="1"/>
<line x1="768.5" y1="220.5" x2="768.5" y2="214.5" stroke="#ffffff" stroke-width="1"/>
<line x1="774.5" y1="61.5" x2="774.5" y2="67.5" stroke="#ffffff" stroke-width="1"/>
<line x1="774.5" y1="220.5" x2="774.5" y2="214.5" stroke="#ffffff" stroke-width="1"/>
<line x1="780.5" y1="61.5" x2="780.5" y2="67.5" stroke="#ffffff" stroke-width="1"/>
<line x1="780.5" y1="220.5" x2="780.5" y2="214.5" stroke="#ffffff" stroke-width="1"/>
<line x1="786.5" y1="61.5" x2="786.5" y2="71.5" stroke="#ffffff" stroke-width="1"/>
<line x1="786.5" y1="220.5" x2="786.5" y2="210.5" stroke="#ffffff" stroke-width="1"/>
<line x1="792.5" y1="61.5" x2="792.5" y2="67.5" stroke="#ffffff" stroke-width="1"/>
<line x1="792.5" y1="220.5" x2="792.5" y2="214.5" stroke="#ffffff" stroke-width="1"/>
<line x1="798.5" y1="61.5" x2="798.5" y2="67.5" stroke="#ffffff" stroke-width="1"/>
<line x1="798.5" y1="220.5" x2="798.5" y2="214.5" stroke="#ffffff" stroke-width="1"/>
<line x1="804.5" y1="61.5" x2="804.5" y2="67.5" stroke="#ffffff" stroke-width="1"/>
<line x1="804.5" y1="220.5" x2="804.5" y2="214.5" stroke="#ffffff" stroke-width="1"/>
<line x1="810.5" y1="61.5" x2="810.5" y2="67.5" stroke="#ffffff" stroke-width="1"/>
<line x1="810.5" y1="220.5" x2="810.5" y2="214.5" stroke="#ffffff" stroke-width="1"/>
<line x1="816.5" y1="61.5" x2="816.5" y2="67.5" stroke="#ffffff" stroke-width="1"/>
<line x1="816.5" y1="220.5" x2="816.5" y2="214.5" stroke="#ffffff" stroke-width="1"/>
<line x1="822.5" y1="61.5" x2="822.5" y2="67.5" stroke="#ffffff" stroke-width="1"/>
<line x1="822.5" y1="220.5" x2="822.5" y2="214.5" stroke="#ffffff" stroke-width="1"/>
<line x1="201.5" y1="220.5" x2="210.5" y2="220.5" stroke="#ffffff" stroke-width="1"/>
<line x1="829.5" y1="220.5" x2="838.5" y2="220.5" stroke="#ffffff" stroke-width="1"/>
<line x1="204.5" y1="199.5" x2="210.5" y2="199.5" stroke="#ffffff" stroke-width="1"/>
<line x1="829.5" y1="199.5" x2="835.5" y2="199.5" stroke="#ffffff" stroke-width="1"/>
<line x1="204.5" y1="178.5" x2="210.5" y2="178.5" stroke="#ffffff" stroke-width="1"/>
<line x1="829.5" y1="178.5" x2="835.5" y2="178.5" stroke="#ffffff" stroke-width="1"/>
<line x1="204.5" y1="166.5" x2="210.5" y2="166.5" stroke="#ffffff" stroke-width="1"/>
<line x1="829.5" y1="166.5" x2="835.5" y2="166.5" stroke="#ffffff" stroke-width="1"/>
<line x1="204.5" y1="157.5" x2="210.5" y2="157.5" stroke="#ffffff" stroke-width="1"/>
<line x1="829.5" y1="157.5" x2="835.5" y2="157.5" stroke="#ffffff" stroke-width="1"/>
<line x1="201.5" y1="150.5" x2="210.5" y2="150.5" stroke="#ffffff" stroke-width="1"/>
<line x1="829.5" y1="150.5" x2="838.5" y2="150.5" stroke="#ffffff" stroke-width="1"/>
<line x1="204.5" y1="130.5" x2="210.5" y2="130.5" stroke="#ffffff" stroke-width="1"/>
<line x1="829.5" y1="130.5" x2="835.5" y2="130.5" stroke="#ffffff" stroke-width="1"/>
<line x1="204.5" y1="109.5" x2="210.5" y2="109.5" stroke="#ffffff" stroke-width="1"/>
<line x1="829.5" y1="109.5" x2="835.5" y2="109.5" stroke="#ffffff" stroke-width="1"/>
<line x1="204.5" y1="96.5" x2="210.5" y2="96.5" stroke="#ffffff" stroke-width="1"/>
<line x1="829.5" y1="96.5" x2="835.5" y2="96.5" stroke="#ffffff" stroke-width="1"/>
<line x1="204.5" y1="88.5" x2="210.5" y2="88.5" stroke="#ffffff" stroke-width="1"/>
<line x1="829.5" y1="88.5" x2="835.5" y2="88.5" stroke="#ffffff" stroke-width="1"/>
<line x1="201.5" y1="81.5" x2="210.5" y2="81.5" stroke="#ffffff" stroke-width="1"/>
<line x1="829.5" y1="81.5" x2="838.5" y2="81.5" stroke="#ffffff" stroke-width="1"/>
<line x1="204.5" y1="61.5" x2="210.5" y2="61.5" stroke="#ffffff" stroke-width="1"/>
<line x1="829.5" y1="61.5" x2="835.5" y2="61.5" stroke="#ffffff" stroke-width="1"/>
<defs><linearGradient id="cb" x1="0" y1="1" x2="0" y2="0"><stop offset="0" stop-color="#8000ff"/><stop offset="0.2" stop-color="#0000ff"/><stop offset="0.4" stop-color="#00ffff"/><stop offset="0.6" stop-color="#00ff00"/><stop offset="0.8" stop-color="#ffff00"/><stop offset="1" stop-color="#ff0000"/></linearGradient></defs>
<rect x="850.5" y="77.5" width="32.0" height="127.0" fill="url(#cb)" stroke="#fff" stroke-width="1"/>
<line x1="877.5" y1="107.5" x2="882.5" y2="107.5" stroke="#ffffff" stroke-width="1"/>
<line x1="877.5" y1="94.5" x2="882.5" y2="94.5" stroke="#ffffff" stroke-width="1"/>
<line x1="877.5" y1="86.5" x2="882.5" y2="86.5" stroke="#ffffff" stroke-width="1"/>
<line x1="877.5" y1="81.5" x2="882.5" y2="81.5" stroke="#ffffff" stroke-width="1"/>
<line x1="874.5" y1="119.5" x2="882.5" y2="119.5" stroke="#ffffff" stroke-width="1"/>
<line x1="877.5" y1="149.5" x2="882.5" y2="149.5" stroke="#ffffff" stroke-width="1"/>
<line x1="877.5" y1="136.5" x2="882.5" y2="136.5" stroke="#ffffff" stroke-width="1"/>
<line x1="877.5" y1="129.5" x2="882.5" y2="129.5" stroke="#ffffff" stroke-width="1"/>
<line x1="877.5" y1="123.5" x2="882.5" y2="123.5" stroke="#ffffff" stroke-width="1"/>
<line x1="874.5" y1="162.5" x2="882.5" y2="162.5" stroke="#ffffff" stroke-width="1"/>
<line x1="877.5" y1="191.5" x2="882.5" y2="191.5" stroke="#ffffff" stroke-width="1"/>
<line x1="877.5" y1="179.5" x2="882.5" y2="179.5" stroke="#ffffff" stroke-width="1"/>
<line x1="877.5" y1="171.5" x2="882.5" y2="171.5" stroke="#ffffff" stroke-width="1"/>
<line x1="877.5" y1="166.5" x2="882.5" y2="166.5" stroke="#ffffff" stroke-width="1"/>
<rect x="914" y="70" width="5" height="1" fill="#fff"/>
<rect x="914" y="112" width="5" height="1" fill="#fff"/>
<rect x="914" y="154" width="5" height="1" fill="#fff"/>
<rect x="914" y="196" width="5" height="1" fill="#fff"/>
<line x1="210.5" y1="255.5" x2="829.5" y2="255.5" stroke="#ffffff" stroke-width="1"/>
<line x1="210.5" y1="449.5" x2="829.5" y2="449.5" stroke="#ffffff" stroke-width="1"/>
<line x1="210.5" y1="255.5" x2="210.5" y2="449.5" stroke="#ffffff" stroke-width="1"/>
<line x1="829.5" y1="255.5" x2="829.5" y2="449.5" stroke="#ffffff" stroke-width="1"/>
<line x1="216.5" y1="255.5" x2="216.5" y2="261.5" stroke="#ffffff" stroke-width="1"/>
<line x1="216.5" y1="449.5" x2="216.5" y2="443.5" stroke="#ffffff" stroke-width="1"/>
<line x1="222.5" y1="255.5" x2="222.5" y2="261.5" stroke="#ffffff" stroke-width="1"/>
<line x1="222.5" y1="449.5" x2="222.5" y2="443.5" stroke="#ffffff" stroke-width="1"/>
<line x1="228.5" y1="255.5" x2="228.5" y2="261.5" stroke="#ffffff" stroke-width="1"/>
<line x1="228.5" y1="449.5" x2="228.5" y2="443.5" stroke="#ffffff" stroke-width="1"/>
<line x1="234.5" y1="255.5" x2="234.5" y2="261.5" stroke="#ffffff" stroke-width="1"/>
<line x1="234.5" y1="449.5" x2="234.5" y2="443.5" stroke="#ffffff" stroke-width="1"/>
<line x1="240.5" y1="255.5" x2="240.5" y2="265.5" stroke="#ffffff" stroke-width="1"/>
<line x1="240.5" y1="449.5" x2="240.5" y2="439.5" stroke="#ffffff" stroke-width="1"/>
<line x1="246.5" y1="255.5" x2="246.5" y2="261.5" stroke="#ffffff" stroke-width="1"/>
<line x1="246.5" y1="449.5" x2="246.5" y2="443.5" stroke="#ffffff" stroke-width="1"/>
<line x1="252.5" y1="255.5" x2="252.5" y2="261.5" stroke="#ffffff" stroke-width="1"/>
<line x1="252.5" y1="449.5" x2="252.5" y2="443.5" stroke="#ffffff" stroke-width="1"/>
<line x1="258.5" y1="255.5" x2="258.5" y2="261.5" stroke="#ffffff" stroke-width="1"/>
<line x1="258.5" y1="449.5" x2="258.5" y2="443.5" stroke="#ffffff" stroke-width="1"/>
<line x1="264.5" y1="255.5" x2="264.5" y2="261.5" stroke="#ffffff" stroke-width="1"/>
<line x1="264.5" y1="449.5" x2="264.5" y2="443.5" stroke="#ffffff" stroke-width="1"/>
<line x1="270.5" y1="255.5" x2="270.5" y2="261.5" stroke="#ffffff" stroke-width="1"/>
<line x1="270.5" y1="449.5" x2="270.5" y2="443.5" stroke="#ffffff" stroke-width="1"/>
<line x1="276.5" y1="255.5" x2="276.5" y2="261.5" stroke="#ffffff" stroke-width="1"/>
<line x1="276.5" y1="449.5" x2="276.5" y2="443.5" stroke="#ffffff" stroke-width="1"/>
<line x1="282.5" y1="255.5" x2="282.5" y2="261.5" stroke="#ffffff" stroke-width="1"/>
<line x1="282.5" y1="449.5" x2="282.5" y2="443.5" stroke="#ffffff" stroke-width="1"/>
<line x1="288.5" y1="255.5" x2="288.5" y2="261.5" stroke="#ffffff" stroke-width="1"/>
<line x1="288.5" y1="449.5" x2="288.5" y2="443.5" stroke="#ffffff" stroke-width="1"/>
<line x1="295.5" y1="255.5" x2="295.5" y2="265.5" stroke="#ffffff" stroke-width="1"/>
<line x1="295.5" y1="449.5" x2="295.5" y2="439.5" stroke="#ffffff" stroke-width="1"/>
<line x1="301.5" y1="255.5" x2="301.5" y2="261.5" stroke="#ffffff" stroke-width="1"/>
<line x1="301.5" y1="449.5" x2="301.5" y2="443.5" stroke="#ffffff" stroke-width="1"/>
<line x1="307.5" y1="255.5" x2="307.5" y2="261.5" stroke="#ffffff" stroke-width="1"/>
<line x1="307.5" y1="449.5" x2="307.5" y2="443.5" stroke="#ffffff" stroke-width="1"/>
<line x1="313.5" y1="255.5" x2="313.5" y2="261.5" stroke="#ffffff" stroke-width="1"/>
<line x1="313.5" y1="449.5" x2="313.5" y2="443.5" stroke="#ffffff" stroke-width="1"/>
<line x1="319.5" y1="255.5" x2="319.5" y2="261.5" stroke="#ffffff" stroke-width="1"/>
<line x1="319.5" y1="449.5" x2="319.5" y2="443.5" stroke="#ffffff" stroke-width="1"/>
<line x1="325.5" y1="255.5" x2="325.5" y2="261.5" stroke="#ffffff" stroke-width="1"/>
<line x1="325.5" y1="449.5" x2="325.5" y2="443.5" stroke="#ffffff" stroke-width="1"/>
<line x1="331.5" y1="255.5" x2="331.5" y2="261.5" stroke="#ffffff" stroke-width="1"/>
<line x1="331.5" y1="449.5" x2="331.5" y2="443.5" stroke="#ffffff" stroke-width="1"/>
<line x1="337.5" y1="255.5" x2="337.5" y2="261.5" stroke="#ffffff" stroke-width="1"/>
<line x1="337.5" y1="449.5" x2="337.5" y2="443.5" stroke="#ffffff" stroke-width="1"/>
<line x1="343.5" y1="255.5" x2="343.5" y2="261.5" stroke="#ffffff" stroke-width="1"/>
<line x1="343.5" y1="449.5" x2="343.5" y2="443.5" stroke="#ffffff" stroke-width="1"/>
<line x1="349.5" y1="255.5" x2="349.5" y2="265.5" stroke="#ffffff" stroke-width="1"/>
<line x1="349.5" y1="449.5" x2="349.5" y2="439.5" stroke="#ffffff" stroke-width="1"/>
<line x1="355.5" y1="255.5" x2="355.5" y2="261.5" stroke="#ffffff" stroke-width="1"/>
<line x1="355.5" y1="449.5" x2="355.5" y2="443.5" stroke="#ffffff" stroke-width="1"/>
<line x1="361.5" y1="255.5" x2="361.5" y2="261.5" stroke="#ffffff" stroke-width="1"/>
<line x1="361.5" y1="449.5" x2="361.5" y2="443.5" stroke="#ffffff" stroke-width="1"/>
<line x1="367.5" y1="255.5" x2="367.5" y2="261.5" stroke="#ffffff" stroke-width="1"/>
<line x1="367.5" y1="449.5" x2="367.5" y2="443.5" stroke="#ffffff" stroke-width="1"/>
<line x1="373.5" y1="255.5" x2="373.5" y2="261.5" stroke="#ffffff" stroke-width="1"/>
<line x1="373.5" y1="449.5" x2="373.5" y2="443.5" stroke="#ffffff" stroke-width="1"/>
<line x1="379.5" y1="255.5" x2="379.5" y2="261.5" stroke="#ffffff" stroke-width="1"/>
<line x1="379.5" y1="449.5" x2="379.5" y2="443.5" stroke="#ffffff" stroke-width="1"/>
<line x1="386.5" y1="255.5" x2="386.5" y2="261.5" stroke="#ffffff" stroke-width="1"/>
<line x1="386.5" y1="449.5" x2="386.5" y2="443.5" stroke="#ffffff" stroke-width="1"/>
<line x1="392.5" y1="255.5" x2="392.5" y2="261.5" stroke="#ffffff" stroke-width="1"/>
<line x1="392.5" y1="449.5" x2="392.5" y2="443.5" stroke="#ffffff" stroke-width="1"/>
<line x1="398.5" y1="255.5" x2="398.5" y2="261.5" stroke="#ffffff" stroke-width="1"/>
<line x1="398.5" y1="449.5" x2="398.5" y2="443.5" stroke="#ffffff" stroke-width="1"/>
<line x1="404.5" y1="255.5" x2="404.5" y2="265.5" stroke="#ffffff" stroke-width="1"/>
<line x1="404.5" y1="449.5" x2="404.5" y2="439.5" stroke="#ffffff" stroke-width="1"/>
<line x1="410.5" y1="255.5" x2="410.5" y2="261.5" stroke="#ffffff" stroke-width="1"/>
<line x1="410.5" y1="449.5" x2="410.5" y2="443.5" stroke="#ffffff" stroke-width="1"/>
<line x1="416.5" y1="255.5" x2="416.5" y2="261.5" stroke="#ffffff" stroke-width="1"/>
<line x1="416.5" y1="449.5" x2="416.5" y2="443.5" stroke="#ffffff" stroke-width="1"/>
<line x1="422.5" y1="255.5" x2="422.5" y2="261.5" stroke="#ffffff" stroke-width="1"/>
<line x1="422.5" y1="449.5" x2="422.5" y2="443.5" stroke="#ffffff" stroke-width="1"/>
<line x1="428.5" y1="255.5" x2="428.5" y2="261.5" stroke="#ffffff" stroke-width="1"/>
<line x1="428.5" y1="449.5" x2="428.5" y2="443.5" stroke="#ffffff" stroke-width="1"/>
<line x1="434.5" y1="255.5" x2="434.5" y2="261.5" stroke="#ffffff" stroke-width="1"/>
<line x1="434.5" y1="449.5" x2="434.5" y2="443.5" stroke="#ffffff" stroke-width="1"/>
<line x1="440.5" y1="255.5" x2="440.5" y2="261.5" stroke="#ffffff" stroke-width="1"/>
<line x1="440.5" y1="449.5" x2="440.5" y2="443.5" stroke="#ffffff" stroke-width="1"/>
<line x1="446.5" y1="255.5" x2="446.5" y2="261.5" stroke="#ffffff" stroke-width="1"/>
<line x1="446.5" y1="449.5" x2="446.5" y2="443.5" stroke="#ffffff" stroke-width="1"/>
<line x1="452.5" y1="255.5" x2="452.5" y2="261.5" stroke="#ffffff" stroke-width="1"/>
<line x1="452.5" y1="449.5" x2="452.5" y2="443.5" stroke="#ffffff" stroke-width="1"/>
<line x1="458.5" y1="255.5" x2="458.5" y2="265.5" stroke="#ffffff" stroke-width="1"/>
<line x1="458.5" y1="449.5" x2="458.5" y2="439.5" stroke="#ffffff" stroke-width="1"/>
<line x1="464.5" y1="255.5" x2="464.5" y2="261.5" stroke="#ffffff" stroke-width="1"/>
<line x1="464.5" y1="449.5" x2="464.5" y2="443.5" stroke="#ffffff" stroke-width="1"/>
<line x1="470.5" y1="255.5" x2="470.5" y2="261.5" stroke="#ffffff" stroke-width="1"/>
<line x1="470.5" y1="449.5" x2="470.5" y2="443.5" stroke="#ffffff" stroke-width="1"/>
<line x1="477.5" y1="255.5" x2="477.5" y2="261.5" stroke="#ffffff" stroke-width="1"/>
<line x1="477.5" y1="449.5" x2="477.5" y2="443.5" stroke="#ffffff" stroke-width="1"/>
<line x1="483.5" y1="255.5" x2="483.5" y2="261.5" stroke="#ffffff" stroke-width="1"/>
<line x1="483.5" y1="449.5" x2="483.5" y2="443.5" stroke="#ffffff" stroke-width="1"/>
<line x1="489.5" y1="255.5" x2="489.5" y2="261.5" stroke="#ffffff" stroke-width="1"/>
<line x1="489.5" y1="449.5" x2="489.5" y2="443.5" stroke="#ffffff" stroke-width="1"/>
<line x1="495.5" y1="255.5" x2="495.5" y2="261.5" stroke="#ffffff" stroke-width="1"/>
<line x1="495.5" y1="449.5" x2="495.5" y2="443.5" stroke="#ffffff" stroke-width="1"/>
<line x1="501.5" y1="255.5" x2="501.5" y2="261.5" stroke="#ffffff" stroke-width="1"/>
<line x1="501.5" y1="449.5" x2="501.5" y2="443.5" stroke="#ffffff" stroke-width="1"/>
<line x1="507.5" y1="255.5" x2="507.5" y2="261.5" stroke="#ffffff" stroke-width="1"/>
<line x1="507.5" y1="449.5" x2="507.5" y2="443.5" stroke="#ffffff" stroke-width="1"/>
<line x1="513.5" y1="255.5" x2="513.5" y2="265.5" stroke="#ffffff" stroke-width="1"/>
<line x1="513.5" y1="449.5" x2="513.5" y2="439.5" stroke="#ffffff" stroke-width="1"/>
<line x1="519.5" y1="255.5" x2="519.5" y2="261.5" stroke="#ffffff" stroke-width="1"/>
<line x1="519.5" y1="449.5" x2="519.5" y2="443.5" stroke="#ffffff" stroke-width="1"/>
<line x1="525.5" y1="255.5" x2="525.5" y2="261.5" stroke="#ffffff" stroke-width="1"/>
<line x1="525.5" y1="449.5" x2="525.5" y2="443.5" stroke="#ffffff" stroke-width="1"/>
<line x1="531.5" y1="255.5" x2="531.5" y2="261.5" stroke="#ffffff" stroke-width="1"/>
<line x1="531.5" y1="449.5" x2="531.5" y2="443.5" stroke="#ffffff" stroke-width="1"/>
<line x1="537.5" y1="255.5" x2="537.5" y2="261.5" stroke="#ffffff" stroke-width="1"/>
<line x1="537.5" y1="449.5" x2="537.5" y2="443.5" stroke="#ffffff" stroke-width="1"/>
<line x1="543.5" y1="255.5" x2="543.5" y2="261.5" stroke="#ffffff" stroke-width="1"/>
<line x1="543.5" y1="449.5" x2="543.5" y2="443.5" stroke="#ffffff" stroke-width="1"/>
<line x1="549.5" y1="255.5" x2="549.5" y2="261.5" stroke="#ffffff" stroke-width="1"/>
<line x1="549.5" y1="449.5" x2="549.5" y2="443.5" stroke="#ffffff" stroke-width="1"/>
<line x1="555.5" y1="255.5" x2="555.5" y2="261.5" stroke="#ffffff" stroke-width="1"/>
<line x1="555.5" y1="449.5" x2="555.5" y2="443.5" stroke="#ffffff" stroke-width="1"/>
<line x1="561.5" y1="255.5" x2="561.5" y2="261.5" stroke="#ffffff" stroke-width="1"/>
<line x1="561.5" y1="449.5" x2="561.5" y2="443.5" stroke="#ffffff" stroke-width="1"/>
<line x1="568.5" y1="255.5" x2="568.5" y2="265.5" stroke="#ffffff" stroke-width="1"/>
<line x1="568.5" y1="449.5" x2="568.5" y2="439.5" stroke="#ffffff" stroke-width="1"/>
<line x1="574.5" y1="255.5" x2="574.5" y2="261.5" stroke="#ffffff" stroke-width="1"/>
<line x1="574.5" y1="449.5" x2="574.5" y2="443.5" stroke="#ffffff" stroke-width="1"/>
<line x1="580.5" y1="255.5" x2="580.5" y2="261.5" stroke="#ffffff" stroke-width="1"/>
<line x1="580.5" y1="449.5" x2="580.5" y2="443.5" stroke="#ffffff" stroke-width="1"/>
<line x1="586.5" y1="255.5" x2="586.5" y2="261.5" stroke="#ffffff" stroke-width="1"/>
<line x1="586.5" y1="449.5" x2="586.5" y2="443.5" stroke="#ffffff" stroke-width="1"/>
<line x1="592.5" y1="255.5" x2="592.5" y2="261.5" stroke="#ffffff" stroke-width="1"/>
<line x1="592.5" y1="449.5" x2="592.5" y2="443.5" stroke="#ffffff" stroke-width="1"/>
<line x1="598.5" y1="255.5" x2="598.5" y2="261.5" stroke="#ffffff" stroke-width="1"/>
<line x1="598.5" y1="449.5" x2="598.5" y2="443.5" stroke="#ffffff" stroke-width="1"/>
<line x1="604.5" y1="255.5" x2="604.5" y2="261.5" stroke="#ffffff" stroke-width="1"/>
<line x1="604.5" y1="449.5" x2="604.5" y2="443.5" stroke="#ffffff" stroke-width="1"/>
<line x1="610.5" y1="255.5" x2="610.5" y2="261.5" stroke="#ffffff" stroke-width="1"/>
<line x1="610.5" y1="449.5" x2="610.5" y2="443.5" stroke="#ffffff" stroke-width="1"/>
<line x1="616.5" y1="255.5" x2="616.5" y2="261.5" stroke="#ffffff" stroke-width="1"/>
<line x1="616.5" y1="449.5" x2="616.5" y2="443.5" stroke="#ffffff" stroke-width="1"/>
<line x1="622.5" y1="255.5" x2="622.5" y2="265.5" stroke="#ffffff" stroke-width="1"/>
<line x1="622.5" y1="449.5" x2="622.5" y2="439.5" stroke="#ffffff" stroke-width="1"/>
<line x1="628.5" y1="255.5" x2="628.5" y2="261.5" stroke="#ffffff" stroke-width="1"/>
<line x1="628.5" y1="449.5" x2="628.5" y2="443.5" stroke="#ffffff" stroke-width="1"/>
<line x1="634.5" y1="255.5" x2="634.5" y2="261.5" stroke="#ffffff" stroke-width="1"/>
<line x1="634.5" y1="449.5" x2="634.5" y2="443.5" stroke="#ffffff" stroke-width="1"/>
<line x1="640.5" y1="255.5" x2="640.5" y2="261.5" stroke="#ffffff" stroke-width="1"/>
<line x1="640.5" y1="449.5" x2="640.5" y2="443.5" stroke="#ffffff" stroke-width="1"/>
<line x1="646.5" y1="255.5" x2="646.5" y2="261.5" stroke="#ffffff" stroke-width="1"/>
<line x1="646.5" y1="449.5" x2="646.5" y2="443.5" stroke="#ffffff" stroke-width="1"/>
<line x1="653.5" y1="255.5" x2="653.5" y2="261.5" stroke="#ffffff" stroke-width="1"/>
<line x1="653.5" y1="449.5" x2="653.5" y2="443.5" stroke="#ffffff" stroke-width="1"/>
<line x1="659.5" y1="255.5" x2="659.5" y2="261.5" stroke="#ffffff" stroke-width="1"/>
<line x1="659.5" y1="449.5" x2="659.5" y2="443.5" stroke="#ffffff" stroke-width="1"/>
<line x1="665.5" y1="255.5" x2="665.5" y2="261.5" stroke="#ffffff" stroke-width="1"/>
<line x1="665.5" y1="449.5" x2="665.5" y2="443.5" stroke="#ffffff" stroke-width="1"/>
<line x1="671.5" y1="255.5" x2="671.5" y2="261.5" stroke="#ffffff" stroke-width="1"/>
<line x1="671.5" y1="449.5" x2="671.5" y2="443.5" stroke="#ffffff" stroke-width="1"/>
<line x1="677.5" y1="255.5" x2="677.5" y2="265.5" stroke="#ffffff" stroke-width="1"/>
<line x1="677.5" y1="449.5" x2="677.5" y2="439.5" stroke="#ffffff" stroke-width="1"/>
<line x1="683.5" y1="255.5" x2="683.5" y2="261.5" stroke="#ffffff" stroke-width="1"/>
<line x1="683.5" y1="449.5" x2="683.5" y2="443.5" stroke="#ffffff" stroke-width="1"/>
<line x1="689.5" y1="255.5" x2="689.5" y2="261.5" stroke="#ffffff" stroke-width="1"/>
<line x1="689.5" y1="449.5" x2="689.5" y2="443.5" stroke="#ffffff" stroke-width="1"/>
<line x1="695.5" y1="255.5" x2="695.5" y2="261.5" stroke="#ffffff" stroke-width="1"/>
<line x1="695.5" y1="449.5" x2="695.5" y2="443.5" stroke="#ffffff" stroke-width="1"/>
<line x1="701.5" y1="255.5" x2="701.5" y2="261.5" stroke="#ffffff" stroke-width="1"/>
<line x1="701.5" y1="449.5" x2="701.5" y2="443.5" stroke="#ffffff" stroke-width="1"/>
<line x1="707.5" y1="255.5" x2="707.5" y2="261.5" stroke="#ffffff" stroke-width="1"/>
<line x1="707.5" y1="449.5" x2="707.5" y2="443.5" stroke="#ffffff" stroke-width="1"/>
<line x1="713.5" y1="255.5" x2="713.5" y2="261.5" stroke="#ffffff" stroke-width="1"/>
<line x1="713.5" y1="449.5" x2="713.5" y2="443.5" stroke="#ffffff" stroke-width="1"/>
<line x1="719.5" y1="255.5" x2="719.5" y2="261.5" stroke="#ffffff" stroke-width="1"/>
<line x1="719.5" y1="449.5" x2="719.5" y2="443.5" stroke="#ffffff" stroke-width="1"/>
<line x1="725.5" y1="255.5" x2="725.5" y2="261.5" stroke="#ffffff" stroke-width="1"/>
<line x1="725.5" y1="449.5" x2="725.5" y2="443.5" stroke="#ffffff" stroke-width="1"/>
<line x1="731.5" y1="255.5" x2="731.5" y2="265.5" stroke="#ffffff" stroke-width="1"/>
<line x1="731.5" y1="449.5" x2="731.5" y2="439.5" stroke="#ffffff" stroke-width="1"/>
<line x1="737.5" y1="255.5" x2="737.5" y2="261.5" stroke="#ffffff" stroke-width="1"/>
<line x1="737.5" y1="449.5" x2="737.5" y2="443.5" stroke="#ffffff" stroke-width="1"/>
<line x1="744.5" y1="255.5" x2="744.5" y2="261.5" stroke="#ffffff" stroke-width="1"/>
<line x1="744.5" y1="449.5" x2="744.5" y2="443.5" stroke="#ffffff" stroke-width="1"/>
<line x1="750.5" y1="255.5" x2="750.5" y2="261.5" stroke="#ffffff" stroke-width="1"/>
<line x1="750.5" y1="449.5" x2="750.5" y2="443.5" stroke="#ffffff" stroke-width="1"/>
<line x1="756.5" y1="255.5" x2="756.5" y2="261.5" stroke="#ffffff" stroke-width="1"/>
<line x1="756.5" y1="449.5" x2="756.5" y2="443.5" stroke="#ffffff" stroke-width="1"/>
<line x1="762.5" y1="255.5" x2="762.5" y2="261.5" stroke="#ffffff" stroke-width="1"/>
<line x1="762.5" y1="449.5" x2="762.5" y2="443.5" stroke="#ffffff" stroke-width="1"/>
<line x1="768.5" y1="255.5" x2="768.5" y2="261.5" stroke="#ffffff" stroke-width="1"/>
<line x1="768.5" y1="449.5" x2="768.5" y2="443.5" stroke="#ffffff" stroke-width="1"/>
<line x1="774.5" y1="255.5" x2="774.5" y2="261.5" stroke="#ffffff" stroke-width="1"/>
<line x1="774.5" y1="449.5" x2="774.5" y2="443.5" stroke="#ffffff" stroke-width="1"/>
<line x1="780.5" y1="255.5" x2="780.5" y2="261.5" stroke="#ffffff" stroke-width="1"/>
<line x1="780.5" y1="449.5" x2="780.5" y2="443.5" stroke="#ffffff" stroke-width="1"/>
<line x1="786.5" y1="255.5" x2="786.5" y2="265.5" stroke="#ffffff" stroke-width="1"/>
<line x1="786.5" y1="449.5" x2="786.5" y2="439.5" stroke="#ffffff" stroke-width="1"/>
<line x1="792.5" y1="255.5" x2="792.5" y2="261.5" stroke="#ffffff" stroke-width="1"/>
<line x1="792.5" y1="449.5" x2="792.5" y2="443.5" stroke="#ffffff" stroke-width="1"/>
<line x1="798.5" y1="255.5" x2="798.5" y2="261.5" stroke="#ffffff" stroke-width="1"/>
<line x1="798.5" y1="449.5" x2="798.5" y2="443.5" stroke="#ffffff" stroke-width="1"/>
<line x1="804.5" y1="255.5" x2="804.5" y2="261.5" stroke="#ffffff" stroke-width="1"/>
<line x1="804.5" y1="449.5" x2="804.5" y2="443.5" stroke="#ffffff" stroke-width="1"/>
<line x1="810.5" y1="255.5" x2="810.5" y2="261.5" stroke="#ffffff" stroke-width="1"/>
<line x1="810.5" y1="449.5" x2="810.5" y2="443.5" stroke="#ffffff" stroke-width="1"/>
<line x1="816.5" y1="255.5" x2="816.5" y2="261.5" stroke="#ffffff" stroke-width="1"/>
<line x1="816.5" y1="449.5" x2="816.5" y2="443.5" stroke="#ffffff" stroke-width="1"/>
<line x1="822.5" y1="255.5" x2="822.5" y2="261.5" stroke="#ffffff" stroke-width="1"/>
<line x1="822.5" y1="449.5" x2="822.5" y2="443.5" stroke="#ffffff" stroke-width="1"/>
<rect x="850.5" y="275.5" width="32.0" height="154.0" fill="url(#cb)" stroke="#fff" stroke-width="1"/>
<line x1="878.5" y1="421.5" x2="882.5" y2="421.5" stroke="#ffffff" stroke-width="1"/>
<line x1="878.5" y1="414.5" x2="882.5" y2="414.5" stroke="#ffffff" stroke-width="1"/>
<line x1="878.5" y1="406.5" x2="882.5" y2="406.5" stroke="#ffffff" stroke-width="1"/>
<line x1="878.5" y1="398.5" x2="882.5" y2="398.5" stroke="#ffffff" stroke-width="1"/>
<line x1="875.5" y1="390.5" x2="882.5" y2="390.5" stroke="#ffffff" stroke-width="1"/>
<line x1="878.5" y1="383.5" x2="882.5" y2="383.5" stroke="#ffffff" stroke-width="1"/>
<line x1="878.5" y1="375.5" x2="882.5" y2="375.5" stroke="#ffffff" stroke-width="1"/>
<line x1="878.5" y1="367.5" x2="882.5" y2="367.5" stroke="#ffffff" stroke-width="1"/>
<line x1="878.5" y1="360.5" x2="882.5" y2="360.5" stroke="#ffffff" stroke-width="1"/>
<line x1="875.5" y1="352.5" x2="882.5" y2="352.5" stroke="#ffffff" stroke-width="1"/>
<line x1="878.5" y1="344.5" x2="882.5" y2="344.5" stroke="#ffffff" stroke-width="1"/>
<line x1="878.5" y1="337.5" x2="882.5" y2="337.5" stroke="#ffffff" stroke-width="1"/>
<line x1="878.5" y1="329.5" x2="882.5" y2="329.5" stroke="#ffffff" stroke-width="1"/>
<line x1="878.5" y1="321.5" x2="882.5" y2="321.5" stroke="#ffffff" stroke-width="1"/>
<line x1="875.5" y1="314.5" x2="882.5" y2="314.5" stroke="#ffffff" stroke-width="1"/>
<line x1="878.5" y1="306.5" x2="882.5" y2="306.5" stroke="#ffffff" stroke-width="1"/>
<line x1="878.5" y1="298.5" x2="882.5" y2="298.5" stroke="#ffffff" stroke-width="1"/>
<line x1="878.5" y1="290.5" x2="882.5" y2="290.5" stroke="#ffffff" stroke-width="1"/>
<line x1="878.5" y1="283.5" x2="882.5" y2="283.5" stroke="#ffffff" stroke-width="1"/>
<line x1="210.5" y1="501.5" x2="829.5" y2="501.5" stroke="#ffffff" stroke-width="1"/>
<line x1="210.5" y1="678.5" x2="829.5" y2="678.5" stroke="#ffffff" stroke-width="1"/>
<line x1="210.5" y1="501.5" x2="210.5" y2="678.5" stroke="#ffffff" stroke-width="1"/>
<line x1="829.5" y1="501.5" x2="829.5" y2="678.5" stroke="#ffffff" stroke-width="1"/>
<line x1="216.5" y1="501.5" x2="216.5" y2="506.5" stroke="#ffffff" stroke-width="1"/>
<line x1="216.5" y1="678.5" x2="216.5" y2="673.5" stroke="#ffffff" stroke-width="1"/>
<line x1="222.5" y1="501.5" x2="222.5" y2="506.5" stroke="#ffffff" stroke-width="1"/>
<line x1="222.5" y1="678.5" x2="222.5" y2="673.5" stroke="#ffffff" stroke-width="1"/>
<line x1="228.5" y1="501.5" x2="228.5" y2="506.5" stroke="#ffffff" stroke-width="1"/>
<line x1="228.5" y1="678.5" x2="228.5" y2="673.5" stroke="#ffffff" stroke-width="1"/>
<line x1="234.5" y1="501.5" x2="234.5" y2="506.5" stroke="#ffffff" stroke-width="1"/>
<line x1="234.5" y1="678.5" x2="234.5" y2="673.5" stroke="#ffffff" stroke-width="1"/>
<line x1="240.5" y1="501.5" x2="240.5" y2="510.5" stroke="#ffffff" stroke-width="1"/>
<line x1="240.5" y1="678.5" x2="240.5" y2="669.5" stroke="#ffffff" stroke-width="1"/>
<line x1="246.5" y1="501.5" x2="246.5" y2="506.5" stroke="#ffffff" stroke-width="1"/>
<line x1="246.5" y1="678.5" x2="246.5" y2="673.5" stroke="#ffffff" stroke-width="1"/>
<line x1="252.5" y1="501.5" x2="252.5" y2="506.5" stroke="#ffffff" stroke-width="1"/>
<line x1="252.5" y1="678.5" x2="252.5" y2="673.5" stroke="#ffffff" stroke-width="1"/>
<line x1="258.5" y1="501.5" x2="258.5" y2="506.5" stroke="#ffffff" stroke-width="1"/>
<line x1="258.5" y1="678.5" x2="258.5" y2="673.5" stroke="#ffffff" stroke-width="1"/>
<line x1="264.5" y1="501.5" x2="264.5" y2="506.5" stroke="#ffffff" stroke-width="1"/>
<line x1="264.5" y1="678.5" x2="264.5" y2="673.5" stroke="#ffffff" stroke-width="1"/>
<line x1="270.5" y1="501.5" x2="270.5" y2="506.5" stroke="#ffffff" stroke-width="1"/>
<line x1="270.5" y1="678.5" x2="270.5" y2="673.5" stroke="#ffffff" stroke-width="1"/>
<line x1="276.5" y1="501.5" x2="276.5" y2="506.5" stroke="#ffffff" stroke-width="1"/>
<line x1="276.5" y1="678.5" x2="276.5" y2="673.5" stroke="#ffffff" stroke-width="1"/>
<line x1="282.5" y1="501.5" x2="282.5" y2="506.5" stroke="#ffffff" stroke-width="1"/>
<line x1="282.5" y1="678.5" x2="282.5" y2="673.5" stroke="#ffffff" stroke-width="1"/>
<line x1="288.5" y1="501.5" x2="288.5" y2="506.5" stroke="#ffffff" stroke-width="1"/>
<line x1="288.5" y1="678.5" x2="288.5" y2="673.5" stroke="#ffffff" stroke-width="1"/>
<line x1="295.5" y1="501.5" x2="295.5" y2="510.5" stroke="#ffffff" stroke-width="1"/>
<line x1="295.5" y1="678.5" x2="295.5" y2="669.5" stroke="#ffffff" stroke-width="1"/>
<line x1="301.5" y1="501.5" x2="301.5" y2="506.5" stroke="#ffffff" stroke-width="1"/>
<line x1="301.5" y1="678.5" x2="301.5" y2="673.5" stroke="#ffffff" stroke-width="1"/>
<line x1="307.5" y1="501.5" x2="307.5" y2="506.5" stroke="#ffffff" stroke-width="1"/>
<line x1="307.5" y1="678.5" x2="307.5" y2="673.5" stroke="#ffffff" stroke-width="1"/>
<line x1="313.5" y1="501.5" x2="313.5" y2="506.5" stroke="#ffffff" stroke-width="1"/>
<line x1="313.5" y1="678.5" x2="313.5" y2="673.5" stroke="#ffffff" stroke-width="1"/>
<line x1="319.5" y1="501.5" x2="319.5" y2="506.5" stroke="#ffffff" stroke-width="1"/>
<line x1="319.5" y1="678.5" x2="319.5" y2="673.5" stroke="#ffffff" stroke-width="1"/>
<line x1="325.5" y1="501.5" x2="325.5" y2="506.5" stroke="#ffffff" stroke-width="1"/>
<line x1="325.5" y1="678.5" x2="325.5" y2="673.5" stroke="#ffffff" stroke-width="1"/>
<line x1="331.5" y1="501.5" x2="331.5" y2="506.5" stroke="#ffffff" stroke-width="1"/>
<line x1="331.5" y1="678.5" x2="331.5" y2="673.5" stroke="#ffffff" stroke-width="1"/>
<line x1="337.5" y1="501.5" x2="337.5" y2="506.5" stroke="#ffffff" stroke-width="1"/>
<line x1="337.5" y1="678.5" x2="337.5" y2="673.5" stroke="#ffffff" stroke-width="1"/>
<line x1="343.5" y1="501.5" x2="343.5" y2="506.5" stroke="#ffffff" stroke-width="1"/>
<line x1="343.5" y1="678.5" x2="343.5" y2="673.5" stroke="#ffffff" stroke-width="1"/>
<line x1="349.5" y1="501.5" x2="349.5" y2="510.5" stroke="#ffffff" stroke-width="1"/>
<line x1="349.5" y1="678.5" x2="349.5" y2="669.5" stroke="#ffffff" stroke-width="1"/>
<line x1="355.5" y1="501.5" x2="355.5" y2="506.5" stroke="#ffffff" stroke-width="1"/>
<line x1="355.5" y1="678.5" x2="355.5" y2="673.5" stroke="#ffffff" stroke-width="1"/>
<line x1="361.5" y1="501.5" x2="361.5" y2="506.5" stroke="#ffffff" stroke-width="1"/>
<line x1="361.5" y1="678.5" x2="361.5" y2="673.5" stroke="#ffffff" stroke-width="1"/>
<line x1="367.5" y1="501.5" x2="367.5" y2="506.5" stroke="#ffffff" stroke-width="1"/>
<line x1="367.5" y1="678.5" x2="367.5" y2="673.5" stroke="#ffffff" stroke-width="1"/>
<line x1="373.5" y1="501.5" x2="373.5" y2="506.5" stroke="#ffffff" stroke-width="1"/>
<line x1="373.5" y1="678.5" x2="373.5" y2="673.5" stroke="#ffffff" stroke-width="1"/>
<line x1="379.5" y1="501.5" x2="379.5" y2="506.5" stroke="#ffffff" stroke-width="1"/>
<line x1="379.5" y1="678.5" x2="379.5" y2="673.5" stroke="#ffffff" stroke-width="1"/>
<line x1="386.5" y1="501.5" x2="386.5" y2="506.5" stroke="#ffffff" stroke-width="1"/>
<line x1="386.5" y1="678.5" x2="386.5" y2="673.5" stroke="#ffffff" stroke-width="1"/>
<line x1="392.5" y1="501.5" x2="392.5" y2="506.5" stroke="#ffffff" stroke-width="1"/>
<line x1="392.5" y1="678.5" x2="392.5" y2="673.5" stroke="#ffffff" stroke-width="1"/>
<line x1="398.5" y1="501.5" x2="398.5" y2="506.5" stroke="#ffffff" stroke-width="1"/>
<line x1="398.5" y1="678.5" x2="398.5" y2="673.5" stroke="#ffffff" stroke-width="1"/>
<line x1="404.5" y1="501.5" x2="404.5" y2="510.5" stroke="#ffffff" stroke-width="1"/>
<line x1="404.5" y1="678.5" x2="404.5" y2="669.5" stroke="#ffffff" stroke-width="1"/>
<line x1="410.5" y1="501.5" x2="410.5" y2="506.5" stroke="#ffffff" stroke-width="1"/>
<line x1="410.5" y1="678.5" x2="410.5" y2="673.5" stroke="#ffffff" stroke-width="1"/>
<line x1="416.5" y1="501.5" x2="416.5" y2="506.5" stroke="#ffffff" stroke-width="1"/>
<line x1="416.5" y1="678.5" x2="416.5" y2="673.5" stroke="#ffffff" stroke-width="1"/>
<line x1="422.5" y1="501.5" x2="422.5" y2="506.5" stroke="#ffffff" stroke-width="1"/>
<line x1="422.5" y1="678.5" x2="422.5" y2="673.5" stroke="#ffffff" stroke-width="1"/>
<line x1="428.5" y1="501.5" x2="428.5" y2="506.5" stroke="#ffffff" stroke-width="1"/>
<line x1="428.5" y1="678.5" x2="428.5" y2="673.5" stroke="#ffffff" stroke-width="1"/>
<line x1="434.5" y1="501.5" x2="434.5" y2="506.5" stroke="#ffffff" stroke-width="1"/>
<line x1="434.5" y1="678.5" x2="434.5" y2="673.5" stroke="#ffffff" stroke-width="1"/>
<line x1="440.5" y1="501.5" x2="440.5" y2="506.5" stroke="#ffffff" stroke-width="1"/>
<line x1="440.5" y1="678.5" x2="440.5" y2="673.5" stroke="#ffffff" stroke-width="1"/>
<line x1="446.5" y1="501.5" x2="446.5" y2="506.5" stroke="#ffffff" stroke-width="1"/>
<line x1="446.5" y1="678.5" x2="446.5" y2="673.5" stroke="#ffffff" stroke-width="1"/>
<line x1="452.5" y1="501.5" x2="452.5" y2="506.5" stroke="#ffffff" stroke-width="1"/>
<line x1="452.5" y1="678.5" x2="452.5" y2="673.5" stroke="#ffffff" stroke-width="1"/>
<line x1="458.5" y1="501.5" x2="458.5" y2="510.5" stroke="#ffffff" stroke-width="1"/>
<line x1="458.5" y1="678.5" x2="458.5" y2="669.5" stroke="#ffffff" stroke-width="1"/>
<line x1="464.5" y1="501.5" x2="464.5" y2="506.5" stroke="#ffffff" stroke-width="1"/>
<line x1="464.5" y1="678.5" x2="464.5" y2="673.5" stroke="#ffffff" stroke-width="1"/>
<line x1="470.5" y1="501.5" x2="470.5" y2="506.5" stroke="#ffffff" stroke-width="1"/>
<line x1="470.5" y1="678.5" x2="470.5" y2="673.5" stroke="#ffffff" stroke-width="1"/>
<line x1="477.5" y1="501.5" x2="477.5" y2="506.5" stroke="#ffffff" stroke-width="1"/>
<line x1="477.5" y1="678.5" x2="477.5" y2="673.5" stroke="#ffffff" stroke-width="1"/>
<line x1="483.5" y1="501.5" x2="483.5" y2="506.5" stroke="#ffffff" stroke-width="1"/>
<line x1="483.5" y1="678.5" x2="483.5" y2="673.5" stroke="#ffffff" stroke-width="1"/>
<line x1="489.5" y1="501.5" x2="489.5" y2="506.5" stroke="#ffffff" stroke-width="1"/>
<line x1="489.5" y1="678.5" x2="489.5" y2="673.5" stroke="#ffffff" stroke-width="1"/>
<line x1="495.5" y1="501.5" x2="495.5" y2="506.5" stroke="#ffffff" stroke-width="1"/>
<line x1="495.5" y1="678.5" x2="495.5" y2="673.5" stroke="#ffffff" stroke-width="1"/>
<line x1="501.5" y1="501.5" x2="501.5" y2="506.5" stroke="#ffffff" stroke-width="1"/>
<line x1="501.5" y1="678.5" x2="501.5" y2="673.5" stroke="#ffffff" stroke-width="1"/>
<line x1="507.5" y1="501.5" x2="507.5" y2="506.5" stroke="#ffffff" stroke-width="1"/>
<line x1="507.5" y1="678.5" x2="507.5" y2="673.5" stroke="#ffffff" stroke-width="1"/>
<line x1="513.5" y1="501.5" x2="513.5" y2="510.5" stroke="#ffffff" stroke-width="1"/>
<line x1="513.5" y1="678.5" x2="513.5" y2="669.5" stroke="#ffffff" stroke-width="1"/>
<line x1="519.5" y1="501.5" x2="519.5" y2="506.5" stroke="#ffffff" stroke-width="1"/>
<line x1="519.5" y1="678.5" x2="519.5" y2="673.5" stroke="#ffffff" stroke-width="1"/>
<line x1="525.5" y1="501.5" x2="525.5" y2="506.5" stroke="#ffffff" stroke-width="1"/>
<line x1="525.5" y1="678.5" x2="525.5" y2="673.5" stroke="#ffffff" stroke-width="1"/>
<line x1="531.5" y1="501.5" x2="531.5" y2="506.5" stroke="#ffffff" stroke-width="1"/>
<line x1="531.5" y1="678.5" x2="531.5" y2="673.5" stroke="#ffffff" stroke-width="1"/>
<line x1="537.5" y1="501.5" x2="537.5" y2="506.5" stroke="#ffffff" stroke-width="1"/>
<line x1="537.5" y1="678.5" x2="537.5" y2="673.5" stroke="#ffffff" stroke-width="1"/>
<line x1="543.5" y1="501.5" x2="543.5" y2="506.5" stroke="#ffffff" stroke-width="1"/>
<line x1="543.5" y1="678.5" x2="543.5" y2="673.5" stroke="#ffffff" stroke-width="1"/>
<line x1="549.5" y1="501.5" x2="549.5" y2="506.5" stroke="#ffffff" stroke-width="1"/>
<line x1="549.5" y1="678.5" x2="549.5" y2="673.5" stroke="#ffffff" stroke-width="1"/>
<line x1="555.5" y1="501.5" x2="555.5" y2="506.5" stroke="#ffffff" stroke-width="1"/>
<line x1="555.5" y1="678.5" x2="555.5" y2="673.5" stroke="#ffffff" stroke-width="1"/>
<line x1="561.5" y1="501.5" x2="561.5" y2="506.5" stroke="#ffffff" stroke-width="1"/>
<line x1="561.5" y1="678.5" x2="561.5" y2="673.5" stroke="#ffffff" stroke-width="1"/>
<line x1="568.5" y1="501.5" x2="568.5" y2="510.5" stroke="#ffffff" stroke-width="1"/>
<line x1="568.5" y1="678.5" x2="568.5" y2="669.5" stroke="#ffffff" stroke-width="1"/>
<line x1="574.5" y1="501.5" x2="574.5" y2="506.5" stroke="#ffffff" stroke-width="1"/>
<line x1="574.5" y1="678.5" x2="574.5" y2="673.5" stroke="#ffffff" stroke-width="1"/>
<line x1="580.5" y1="501.5" x2="580.5" y2="506.5" stroke="#ffffff" stroke-width="1"/>
<line x1="580.5" y1="678.5" x2="580.5" y2="673.5" stroke="#ffffff" stroke-width="1"/>
<line x1="586.5" y1="501.5" x2="586.5" y2="506.5" stroke="#ffffff" stroke-width="1"/>
<line x1="586.5" y1="678.5" x2="586.5" y2="673.5" stroke="#ffffff" stroke-width="1"/>
<line x1="592.5" y1="501.5" x2="592.5" y2="506.5" stroke="#ffffff" stroke-width="1"/>
<line x1="592.5" y1="678.5" x2="592.5" y2="673.5" stroke="#ffffff" stroke-width="1"/>
<line x1="598.5" y1="501.5" x2="598.5" y2="506.5" stroke="#ffffff" stroke-width="1"/>
<line x1="598.5" y1="678.5" x2="598.5" y2="673.5" stroke="#ffffff" stroke-width="1"/>
<line x1="604.5" y1="501.5" x2="604.5" y2="506.5" stroke="#ffffff" stroke-width="1"/>
<line x1="604.5" y1="678.5" x2="604.5" y2="673.5" stroke="#ffffff" stroke-width="1"/>
<line x1="610.5" y1="501.5" x2="610.5" y2="506.5" stroke="#ffffff" stroke-width="1"/>
<line x1="610.5" y1="678.5" x2="610.5" y2="673.5" stroke="#ffffff" stroke-width="1"/>
<line x1="616.5" y1="501.5" x2="616.5" y2="506.5" stroke="#ffffff" stroke-width="1"/>
<line x1="616.5" y1="678.5" x2="616.5" y2="673.5" stroke="#ffffff" stroke-width="1"/>
<line x1="622.5" y1="501.5" x2="622.5" y2="510.5" stroke="#ffffff" stroke-width="1"/>
<line x1="622.5" y1="678.5" x2="622.5" y2="669.5" stroke="#ffffff" stroke-width="1"/>
<line x1="628.5" y1="501.5" x2="628.5" y2="506.5" stroke="#ffffff" stroke-width="1"/>
<line x1="628.5" y1="678.5" x2="628.5" y2="673.5" stroke="#ffffff" stroke-width="1"/>
<line x1="634.5" y1="501.5" x2="634.5" y2="506.5" stroke="#ffffff" stroke-width="1"/>
<line x1="634.5" y1="678.5" x2="634.5" y2="673.5" stroke="#ffffff" stroke-width="1"/>
<line x1="640.5" y1="501.5" x2="640.5" y2="506.5" stroke="#ffffff" stroke-width="1"/>
<line x1="640.5" y1="678.5" x2="640.5" y2="673.5" stroke="#ffffff" stroke-width="1"/>
<line x1="646.5" y1="501.5" x2="646.5" y2="506.5" stroke="#ffffff" stroke-width="1"/>
<line x1="646.5" y1="678.5" x2="646.5" y2="673.5" stroke="#ffffff" stroke-width="1"/>
<line x1="653.5" y1="501.5" x2="653.5" y2="506.5" stroke="#ffffff" stroke-width="1"/>
<line x1="653.5" y1="678.5" x2="653.5" y2="673.5" stroke="#ffffff" stroke-width="1"/>
<line x1="659.5" y1="501.5" x2="659.5" y2="506.5" stroke="#ffffff" stroke-width="1"/>
<line x1="659.5" y1="678.5" x2="659.5" y2="673.5" stroke="#ffffff" stroke-width="1"/>
<line x1="665.5" y1="501.5" x2="665.5" y2="506.5" stroke="#ffffff" stroke-width="1"/>
<line x1="665.5" y1="678.5" x2="665.5" y2="673.5" stroke="#ffffff" stroke-width="1"/>
<line x1="671.5" y1="501.5" x2="671.5" y2="506.5" stroke="#ffffff" stroke-width="1"/>
<line x1="671.5" y1="678.5" x2="671.5" y2="673.5" stroke="#ffffff" stroke-width="1"/>
<line x1="677.5" y1="501.5" x2="677.5" y2="510.5" stroke="#ffffff" stroke-width="1"/>
<line x1="677.5" y1="678.5" x2="677.5" y2="669.5" stroke="#ffffff" stroke-width="1"/>
<line x1="683.5" y1="501.5" x2="683.5" y2="506.5" stroke="#ffffff" stroke-width="1"/>
<line x1="683.5" y1="678.5" x2="683.5" y2="673.5" stroke="#ffffff" stroke-width="1"/>
<line x1="689.5" y1="501.5" x2="689.5" y2="506.5" stroke="#ffffff" stroke-width="1"/>
<line x1="689.5" y1="678.5" x2="689.5" y2="673.5" stroke="#ffffff" stroke-width="1"/>
<line x1="695.5" y1="501.5" x2="695.5" y2="506.5" stroke="#ffffff" stroke-width="1"/>
<line x1="695.5" y1="678.5" x2="695.5" y2="673.5" stroke="#ffffff" stroke-width="1"/>
<line x1="701.5" y1="501.5" x2="701.5" y2="506.5" stroke="#ffffff" stroke-width="1"/>
<line x1="701.5" y1="678.5" x2="701.5" y2="673.5" stroke="#ffffff" stroke-width="1"/>
<line x1="707.5" y1="501.5" x2="707.5" y2="506.5" stroke="#ffffff" stroke-width="1"/>
<line x1="707.5" y1="678.5" x2="707.5" y2="673.5" stroke="#ffffff" stroke-width="1"/>
<line x1="713.5" y1="501.5" x2="713.5" y2="506.5" stroke="#ffffff" stroke-width="1"/>
<line x1="713.5" y1="678.5" x2="713.5" y2="673.5" stroke="#ffffff" stroke-width="1"/>
<line x1="719.5" y1="501.5" x2="719.5" y2="506.5" stroke="#ffffff" stroke-width="1"/>
<line x1="719.5" y1="678.5" x2="719.5" y2="673.5" stroke="#ffffff" stroke-width="1"/>
<line x1="725.5" y1="501.5" x2="725.5" y2="506.5" stroke="#ffffff" stroke-width="1"/>
<line x1="725.5" y1="678.5" x2="725.5" y2="673.5" stroke="#ffffff" stroke-width="1"/>
<line x1="731.5" y1="501.5" x2="731.5" y2="510.5" stroke="#ffffff" stroke-width="1"/>
<line x1="731.5" y1="678.5" x2="731.5" y2="669.5" stroke="#ffffff" stroke-width="1"/>
<line x1="737.5" y1="501.5" x2="737.5" y2="506.5" stroke="#ffffff" stroke-width="1"/>
<line x1="737.5" y1="678.5" x2="737.5" y2="673.5" stroke="#ffffff" stroke-width="1"/>
<line x1="744.5" y1="501.5" x2="744.5" y2="506.5" stroke="#ffffff" stroke-width="1"/>
<line x1="744.5" y1="678.5" x2="744.5" y2="673.5" stroke="#ffffff" stroke-width="1"/>
<line x1="750.5" y1="501.5" x2="750.5" y2="506.5" stroke="#ffffff" stroke-width="1"/>
<line x1="750.5" y1="678.5" x2="750.5" y2="673.5" stroke="#ffffff" stroke-width="1"/>
<line x1="756.5" y1="501.5" x2="756.5" y2="506.5" stroke="#ffffff" stroke-width="1"/>
<line x1="756.5" y1="678.5" x2="756.5" y2="673.5" stroke="#ffffff" stroke-width="1"/>
<line x1="762.5" y1="501.5" x2="762.5" y2="506.5" stroke="#ffffff" stroke-width="1"/>
<line x1="762.5" y1="678.5" x2="762.5" y2="673.5" stroke="#ffffff" stroke-width="1"/>
<line x1="768.5" y1="501.5" x2="768.5" y2="506.5" stroke="#ffffff" stroke-width="1"/>
<line x1="768.5" y1="678.5" x2="768.5" y2="673.5" stroke="#ffffff" stroke-width="1"/>
<line x1="774.5" y1="501.5" x2="774.5" y2="506.5" stroke="#ffffff" stroke-width="1"/>
<line x1="774.5" y1="678.5" x2="774.5" y2="673.5" stroke="#ffffff" stroke-width="1"/>
<line x1="780.5" y1="501.5" x2="780.5" y2="506.5" stroke="#ffffff" stroke-width="1"/>
<line x1="780.5" y1="678.5" x2="780.5" y2="673.5" stroke="#ffffff" stroke-width="1"/>
<line x1="786.5" y1="501.5" x2="786.5" y2="510.5" stroke="#ffffff" stroke-width="1"/>
<line x1="786.5" y1="678.5" x2="786.5" y2="669.5" stroke="#ffffff" stroke-width="1"/>
<line x1="792.5" y1="501.5" x2="792.5" y2="506.5" stroke="#ffffff" stroke-width="1"/>
<line x1="792.5" y1="678.5" x2="792.5" y2="673.5" stroke="#ffffff" stroke-width="1"/>
<line x1="798.5" y1="501.5" x2="798.5" y2="506.5" stroke="#ffffff" stroke-width="1"/>
<line x1="798.5" y1="678.5" x2="798.5" y2="673.5" stroke="#ffffff" stroke-width="1"/>
<line x1="804.5" y1="501.5" x2="804.5" y2="506.5" stroke="#ffffff" stroke-width="1"/>
<line x1="804.5" y1="678.5" x2="804.5" y2="673.5" stroke="#ffffff" stroke-width="1"/>
<line x1="810.5" y1="501.5" x2="810.5" y2="506.5" stroke="#ffffff" stroke-width="1"/>
<line x1="810.5" y1="678.5" x2="810.5" y2="673.5" stroke="#ffffff" stroke-width="1"/>
<line x1="816.5" y1="501.5" x2="816.5" y2="506.5" stroke="#ffffff" stroke-width="1"/>
<line x1="816.5" y1="678.5" x2="816.5" y2="673.5" stroke="#ffffff" stroke-width="1"/>
<line x1="822.5" y1="501.5" x2="822.5" y2="506.5" stroke="#ffffff" stroke-width="1"/>
<line x1="822.5" y1="678.5" x2="822.5" y2="673.5" stroke="#ffffff" stroke-width="1"/>
<line x1="201.5" y1="501.5" x2="210.5" y2="501.5" stroke="#ffffff" stroke-width="1"/>
<line x1="829.5" y1="501.5" x2="838.5" y2="501.5" stroke="#ffffff" stroke-width="1"/>
<line x1="205.5" y1="508.5" x2="210.5" y2="508.5" stroke="#ffffff" stroke-width="1"/>
<line x1="829.5" y1="508.5" x2="834.5" y2="508.5" stroke="#ffffff" stroke-width="1"/>
<line x1="205.5" y1="515.5" x2="210.5" y2="515.5" stroke="#ffffff" stroke-width="1"/>
<line x1="829.5" y1="515.5" x2="834.5" y2="515.5" stroke="#ffffff" stroke-width="1"/>
<line x1="205.5" y1="522.5" x2="210.5" y2="522.5" stroke="#ffffff" stroke-width="1"/>
<line x1="829.5" y1="522.5" x2="834.5" y2="522.5" stroke="#ffffff" stroke-width="1"/>
<line x1="205.5" y1="529.5" x2="210.5" y2="529.5" stroke="#ffffff" stroke-width="1"/>
<line x1="829.5" y1="529.5" x2="834.5" y2="529.5" stroke="#ffffff" stroke-width="1"/>
<line x1="201.5" y1="536.5" x2="210.5" y2="536.5" stroke="#ffffff" stroke-width="1"/>
<line x1="829.5" y1="536.5" x2="838.5" y2="536.5" stroke="#ffffff" stroke-width="1"/>
<line x1="205.5" y1="543.5" x2="210.5" y2="543.5" stroke="#ffffff" stroke-width="1"/>
<line x1="829.5" y1="543.5" x2="834.5" y2="543.5" stroke="#ffffff" stroke-width="1"/>
<line x1="205.5" y1="551.5" x2="210.5" y2="551.5" stroke="#ffffff" stroke-width="1"/>
<line x1="829.5" y1="551.5" x2="834.5" y2="551.5" stroke="#ffffff" stroke-width="1"/>
<line x1="205.5" y1="558.5" x2="210.5" y2="558.5" stroke="#ffffff" stroke-width="1"/>
<line x1="829.5" y1="558.5" x2="834.5" y2="558.5" stroke="#ffffff" stroke-width="1"/>
<line x1="205.5" y1="565.5" x2="210.5" y2="565.5" stroke="#ffffff" stroke-width="1"/>
<line x1="829.5" y1="565.5" x2="834.5" y2="565.5" stroke="#ffffff" stroke-width="1"/>
<line x1="201.5" y1="572.5" x2="210.5" y2="572.5" stroke="#ffffff" stroke-width="1"/>
<line x1="829.5" y1="572.5" x2="838.5" y2="572.5" stroke="#ffffff" stroke-width="1"/>
<line x1="205.5" y1="579.5" x2="210.5" y2="579.5" stroke="#ffffff" stroke-width="1"/>
<line x1="829.5" y1="579.5" x2="834.5" y2="579.5" stroke="#ffffff" stroke-width="1"/>
<line x1="205.5" y1="586.5" x2="210.5" y2="586.5" stroke="#ffffff" stroke-width="1"/>
<line x1="829.5" y1="586.5" x2="834.5" y2="586.5" stroke="#ffffff" stroke-width="1"/>
<line x1="205.5" y1="593.5" x2="210.5" y2="593.5" stroke="#ffffff" stroke-width="1"/>
<line x1="829.5" y1="593.5" x2="834.5" y2="593.5" stroke="#ffffff" stroke-width="1"/>
<line x1="205.5" y1="600.5" x2="210.5" y2="600.5" stroke="#ffffff" stroke-width="1"/>
<line x1="829.5" y1="600.5" x2="834.5" y2="600.5" stroke="#ffffff" stroke-width="1"/>
<line x1="201.5" y1="607.5" x2="210.5" y2="607.5" stroke="#ffffff" stroke-width="1"/>
<line x1="829.5" y1="607.5" x2="838.5" y2="607.5" stroke="#ffffff" stroke-width="1"/>
<line x1="205.5" y1="614.5" x2="210.5" y2="614.5" stroke="#ffffff" stroke-width="1"/>
<line x1="829.5" y1="614.5" x2="834.5" y2="614.5" stroke="#ffffff" stroke-width="1"/>
<line x1="205.5" y1="621.5" x2="210.5" y2="621.5" stroke="#ffffff" stroke-width="1"/>
<line x1="829.5" y1="621.5" x2="834.5" y2="621.5" stroke="#ffffff" stroke-width="1"/>
<line x1="205.5" y1="628.5" x2="210.5" y2="628.5" stroke="#ffffff" stroke-width="1"/>
<line x1="829.5" y1="628.5" x2="834.5" y2="628.5" stroke="#ffffff" stroke-width="1"/>
<line x1="205.5" y1="636.5" x2="210.5" y2="636.5" stroke="#ffffff" stroke-width="1"/>
<line x1="829.5" y1="636.5" x2="834.5" y2="636.5" stroke="#ffffff" stroke-width="1"/>
<line x1="201.5" y1="643.5" x2="210.5" y2="643.5" stroke="#ffffff" stroke-width="1"/>
<line x1="829.5" y1="643.5" x2="838.5" y2="643.5" stroke="#ffffff" stroke-width="1"/>
<line x1="205.5" y1="650.5" x2="210.5" y2="650.5" stroke="#ffffff" stroke-width="1"/>
<line x1="829.5" y1="650.5" x2="834.5" y2="650.5" stroke="#ffffff" stroke-width="1"/>
<line x1="205.5" y1="657.5" x2="210.5" y2="657.5" stroke="#ffffff" stroke-width="1"/>
<line x1="829.5" y1="657.5" x2="834.5" y2="657.5" stroke="#ffffff" stroke-width="1"/>
<line x1="205.5" y1="664.5" x2="210.5" y2="664.5" stroke="#ffffff" stroke-width="1"/>
<line x1="829.5" y1="664.5" x2="834.5" y2="664.5" stroke="#ffffff" stroke-width="1"/>
<line x1="205.5" y1="671.5" x2="210.5" y2="671.5" stroke="#ffffff" stroke-width="1"/>
<line x1="829.5" y1="671.5" x2="834.5" y2="671.5" stroke="#ffffff" stroke-width="1"/>
<line x1="201.5" y1="678.5" x2="210.5" y2="678.5" stroke="#ffffff" stroke-width="1"/>
<line x1="829.5" y1="678.5" x2="838.5" y2="678.5" stroke="#ffffff" stroke-width="1"/>
<rect x="220" y="572" width="11" height="1" fill="#fff"/>
<rect x="232" y="572" width="14" height="1" fill="#fff"/>
<rect x="248" y="572" width="14" height="1" fill="#fff"/>
<rect x="263" y="572" width="14" height="1" fill="#fff"/>
<rect x="279" y="572" width="14" height="1" fill="#fff"/>
<rect x="295" y="572" width="14" height="1" fill="#fff"/>
<rect x="310" y="572" width="14" height="1" fill="#fff"/>
<rect x="326" y="572" width="14" height="1" fill="#fff"/>
<rect x="341" y="572" width="8" height="1" fill="#fff"/>
<rect x="350" y="607" width="5" height="1" fill="#fff"/>
<rect x="357" y="607" width="14" height="1" fill="#fff"/>
<rect x="373" y="607" width="13" height="1" fill="#fff"/>
<rect x="388" y="607" width="14" height="1" fill="#fff"/>
<rect x="404" y="607" width="14" height="1" fill="#fff"/>
<rect x="419" y="607" width="14" height="1" fill="#fff"/>
<rect x="435" y="607" width="14" height="1" fill="#fff"/>
<rect x="450" y="607" width="14" height="1" fill="#fff"/>
<rect x="466" y="607" width="14" height="1" fill="#fff"/>
<rect x="482" y="607" width="14" height="1" fill="#fff"/>
<rect x="497" y="607" width="14" height="1" fill="#fff"/>
<rect x="513" y="607" width="14" height="1" fill="#fff"/>
<rect x="528" y="607" width="14" height="1" fill="#fff"/>
<rect x="544" y="607" width="14" height="1" fill="#fff"/>
<rect x="559" y="607" width="14" height="1" fill="#fff"/>
<rect x="575" y="607" width="14" height="1" fill="#fff"/>
<rect x="591" y="607" width="14" height="1" fill="#fff"/>
<rect x="606" y="607" width="14" height="1" fill="#fff"/>
<rect x="623" y="643" width="13" height="1" fill="#fff"/>
<rect x="637" y="643" width="14" height="1" fill="#fff"/>
<rect x="653" y="643" width="14" height="1" fill="#fff"/>
<rect x="669" y="643" width="14" height="1" fill="#fff"/>
<rect x="684" y="643" width="14" height="1" fill="#fff"/>
<rect x="700" y="643" width="14" height="1" fill="#fff"/>
<rect x="715" y="643" width="14" height="1" fill="#fff"/>
<rect x="731" y="643" width="14" height="1" fill="#fff"/>
<rect x="746" y="643" width="14" height="1" fill="#fff"/>
<rect x="762" y="643" width="14" height="1" fill="#fff"/>
<rect x="778" y="643" width="14" height="1" fill="#fff"/>
<rect x="793" y="643" width="14" height="1" fill="#fff"/>
<rect x="809" y="643" width="10" height="1" fill="#fff"/>
<rect x="349" y="600" width="1" height="1" fill="#fff"/>
<rect x="621" y="607" width="1" height="1" fill="#fff"/>
<rect x="622" y="609" width="1" height="1" fill="#fff"/>
<polyline points="211,586.3 212,586.7 213,587.1 214,587.4 215,587.8 216,588.1 217,588.5 218,588.9 219,589.2 220,589.6 221,590.0 222,590.3 223,590.7 224,591.0 225,591.4 226,591.8 227,592.1 228,592.5 229,592.9 230,593.2 231,593.6 232,593.9 233,594.3 234,594.7 235,595.0 236,595.4 237,595.8 238,596.1 239,596.5 240,596.8 241,597.2 242,597.6 243,597.9 244,598.3 245,598.7 246,599.0 247,599.4 248,599.7 249,600.1 250,600.5 251,600.8 252,601.2 253,601.5 254,601.9 255,602.3 256,602.6 257,603.0 258,603.3 259,603.7 260,604.1 261,604.4 262,604.8 263,605.1 264,605.5 265,605.8 266,606.2 267,606.6 268,606.9 269,607.3 270,607.6 271,608.0 272,608.3 273,608.7 274,609.0 275,609.4 276,609.7 277,610.1 278,610.4 279,610.8 280,611.1 281,611.5 282,611.8 283,612.2 284,612.5 285,612.9 286,613.2 287,613.6 288,613.9 289,614.3 290,614.6 291,615.0 292,615.3 293,615.7 294,616.0 295,616.3 296,616.7 297,617.0 298,617.4 299,617.7 300,618.0 301,618.4 302,618.7 303,619.1 304,619.4 305,619.7 306,620.1 307,620.4 308,620.7 309,621.1 310,621.4 311,621.7 312,622.1 313,622.4 314,622.7 315,623.1 316,623.4 317,623.7 318,624.0 319,624.4 320,624.7 321,625.0 322,625.3 323,625.7 324,626.0 325,626.3 326,626.6 327,627.0 328,627.3 329,627.6 330,627.9 331,628.2 332,628.5 333,628.9 334,629.2 335,629.5 336,629.8 337,630.1 338,630.4 339,630.7 340,631.0 341,631.3 342,631.7 343,632.0 344,632.3 345,632.6 346,632.9 347,633.2 348,633.5 349,633.8 350,634.1 351,634.4 352,634.7 353,635.0 354,635.3 355,635.6 356,635.9 357,636.2 358,636.5 359,636.8 360,637.0 361,637.3 362,637.6 363,637.9 364,638.2 365,638.5 366,638.8 367,639.1 368,639.3 369,639.6 370,639.9 371,640.2 372,640.5 373,640.7 374,641.0 375,641.3 376,641.6 377,641.9 378,642.1 379,642.4 380,642.7 381,642.9 382,643.2 383,643.5 384,643.7 385,644.0 386,644.3 387,644.5 388,644.8 389,645.1 390,645.3 391,645.6 392,645.9 393,646.1 394,646.4 395,646.6 396,646.9 397,647.1 398,647.4 399,647.6 400,647.9 401,648.1 402,648.4 403,648.6 404,648.9 405,649.1 406,649.4 407,649.6 408,649.9 409,650.1 410,650.3 411,650.6 412,650.8 413,651.1 414,651.3 415,651.5 416,651.8 417,652.0 418,652.2 419,652.5 420,652.7 421,652.9 422,653.1 423,653.4 424,653.6 425,653.8 426,654.0 427,654.3 428,654.5 429,654.7 430,654.9 431,655.1 432,655.3 433,655.6 434,655.8 435,656.0 436,656.2 437,656.4 438,656.6 439,656.8 440,657.0 441,657.2 442,657.4 443,657.6 444,657.8 445,658.0 446,658.2 447,658.4 448,658.6 449,658.8 450,659.0 451,659.2 452,659.4 453,659.6 454,659.8 455,660.0 456,660.2 457,660.3 458,660.5 459,660.7 460,660.9 461,661.1 462,661.2 463,661.4 464,661.6 465,661.8 466,662.0 467,662.1 468,662.3 469,662.5 470,662.6 471,662.8 472,663.0 473,663.1 474,663.3 475,663.5 476,663.6 477,663.8 478,663.9 479,664.1 480,664.3 481,664.4 482,664.6 483,664.7 484,664.9 485,665.0 486,665.2 487,665.3 488,665.5 489,665.6 490,665.8 491,665.9 492,666.0 493,666.2 494,666.3 495,666.4 496,666.6 497,666.7 498,666.8 499,667.0 500,667.1 501,667.2 502,667.4 503,667.5 504,667.6 505,667.7 506,667.9 507,668.0 508,668.1 509,668.2 510,668.3 511,668.4 512,668.6 513,668.7 514,668.8 515,668.9 516,669.0 517,669.1 518,669.2 519,669.3 520,669.4 521,669.5 522,669.6 523,669.7 524,669.8 525,669.9 526,670.0 527,670.1 528,670.2 529,670.3 530,670.3 531,670.4 532,670.5 533,670.6 534,670.7 535,670.8 536,670.8 537,670.9 538,671.0 539,671.1 540,671.1 541,671.2 542,671.3 543,671.3 544,671.4 545,671.5 546,671.5 547,671.6 548,671.6 549,671.7 550,671.8 551,671.8 552,671.9 553,671.9 554,672.0 555,672.0 556,672.1 557,672.1 558,672.1 559,672.2 560,672.2 561,672.3 562,672.3 563,672.3 564,672.4 565,672.4 566,672.4 567,672.4 568,672.5 569,672.5 570,672.5 571,672.5 572,672.6 573,672.6 574,672.6 575,672.6 576,672.6 577,672.6 578,672.6 579,672.6 580,672.6 581,672.6 582,672.6 583,672.6 584,672.6 585,672.6 586,672.6 587,672.6 588,672.6 589,672.6 590,672.6 591,672.6 592,672.5 593,672.5 594,672.5 595,672.5 596,672.4 597,672.4 598,672.4 599,672.3 600,672.3 601,672.3 602,672.2 603,672.2 604,672.2 605,672.1 606,672.1 607,672.0 608,672.0 609,671.9 610,671.9 611,671.8 612,671.7 613,671.7 614,671.6 615,671.5 616,671.5 617,671.4 618,671.3 619,671.3 620,671.2 621,671.1 622,671.0 623,670.9 624,670.9 625,670.8 626,670.7 627,670.6 628,670.5 629,670.4 630,670.3 631,670.2 632,670.1 633,670.0 634,669.9 635,669.8 636,669.6 637,669.5 638,669.4 639,669.3 640,669.2 641,669.0 642,668.9 643,668.8 644,668.6 645,668.5 646,668.4 647,668.2 648,668.1 649,667.9 650,667.8 651,667.6 652,667.5 653,667.3 654,667.2 655,667.0 656,666.8 657,666.7 658,666.5 659,666.3 660,666.1 661,666.0 662,665.8 663,665.6 664,665.4 665,665.2 666,665.0 667,664.8 668,664.6 669,664.4 670,664.2 671,664.0 672,663.8 673,663.6 674,663.4 675,663.1 676,662.9 677,662.7 678,662.5 679,662.2 680,662.0 681,661.8 682,661.5 683,661.3 684,661.0 685,660.8 686,660.5 687,660.3 688,660.0 689,659.7 690,659.5 691,659.2 692,658.9 693,658.6 694,658.4 695,658.1 696,657.8 697,657.5 698,657.2 699,656.9 700,656.6 701,656.3 702,656.0 703,655.7 704,655.4 705,655.1 706,654.7 707,654.4 708,654.1 709,653.7 710,653.4 711,653.1 712,652.7 713,652.4 714,652.0 715,651.7 716,651.3 717,650.9 718,650.6 719,650.2 720,649.8 721,649.4 722,649.1 723,648.7 724,648.3 725,647.9 726,647.5 727,647.1 728,646.7 729,646.3 730,645.8 731,645.4 732,645.0 733,644.6 734,644.1 735,643.7 736,643.2 737,642.8 738,642.4 739,641.9 740,641.4 741,641.0 742,640.5 743,640.0 744,639.6 745,639.1 746,638.6 747,638.1 748,637.6 749,637.1 750,636.6 751,636.1 752,635.6 753,635.0 754,634.5 755,634.0 756,633.5 757,632.9 758,632.4 759,631.8 760,631.3 761,630.7 762,630.1 763,629.6 764,629.0 765,628.4 766,627.8 767,627.3 768,626.7 769,626.1 770,625.5 771,624.8 772,624.2 773,623.6 774,623.0 775,622.3 776,621.7 777,621.1 778,620.4 779,619.8 780,619.1 781,618.4 782,617.8 783,617.1 784,616.4 785,615.7 786,615.0 787,614.3 788,613.6 789,612.9 790,612.2 791,611.5 792,610.7 793,610.0 794,609.2 795,608.5 796,607.7 797,607.0 798,606.2 799,605.4 800,604.7 801,603.9 802,603.1 803,602.3 804,601.5 805,600.7 806,599.9 807,599.0 808,598.2 809,597.4 810,596.5 811,595.7 812,594.8 813,593.9 814,593.1 815,592.2 816,591.3 817,590.4 818,589.5 819,588.6 820,587.7 821,586.8 822,585.8 823,584.9 824,584.0 825,583.0 826,582.1 827,581.1 828,580.1 829,579.1" fill="none" stroke="#00ff00" stroke-width="1" shape-rendering="crispEdges"/>
<text transform="translate(421.60,31.10) scale(0.9,1)" font-size="18.41" textLength="218.18" lengthAdjust="spacing" fill="#ffffff" stroke="#ffffff" stroke-width="0.25">2017/117 01:44:00.000</text><text transform="translate(263.62,51.70) scale(0.9,1)" font-size="17.25" textLength="123.82" lengthAdjust="spacing" fill="#ffffff" stroke="#ffffff" stroke-width="0.25">ELSSCIL/MEx</text><text transform="translate(386.06,51.70) scale(0.9,1)" font-size="17.25" textLength="70.98" lengthAdjust="spacing" fill="#ffffff" stroke="#ffffff" stroke-width="0.25">ELS−07</text><text transform="translate(462.10,51.70) scale(0.9,1)" font-size="17.25" textLength="57.73" lengthAdjust="spacing" fill="#ffffff" stroke="#ffffff" stroke-width="0.25">LR−Bk</text><text transform="translate(533.02,51.70) scale(0.9,1)" font-size="17.25" textLength="271.53" lengthAdjust="spacing" fill="#ffffff" stroke="#ffffff" stroke-width="0.25">(ergs/(cm**2−sr−sec−eV))</text><text transform="translate(221.02,238.70) scale(1.0,1)" font-size="14.20" textLength="38.94" lengthAdjust="spacing" fill="#ffffff" stroke="#ffffff" stroke-width="0.25">02:00</text><text transform="translate(275.31,238.70) scale(1.0,1)" font-size="14.20" textLength="38.94" lengthAdjust="spacing" fill="#ffffff" stroke="#ffffff" stroke-width="0.25">02:30</text><text transform="translate(330.49,238.70) scale(1.0,1)" font-size="14.20" textLength="38.04" lengthAdjust="spacing" fill="#ffffff" stroke="#ffffff" stroke-width="0.25">03:00</text><text transform="translate(384.78,238.70) scale(1.0,1)" font-size="14.20" textLength="38.94" lengthAdjust="spacing" fill="#ffffff" stroke="#ffffff" stroke-width="0.25">03:30</text><text transform="translate(439.06,238.70) scale(1.0,1)" font-size="14.20" textLength="38.94" lengthAdjust="spacing" fill="#ffffff" stroke="#ffffff" stroke-width="0.25">04:00</text><text transform="translate(494.25,238.70) scale(1.0,1)" font-size="14.20" textLength="38.04" lengthAdjust="spacing" fill="#ffffff" stroke="#ffffff" stroke-width="0.25">04:30</text><text transform="translate(548.54,238.70) scale(1.0,1)" font-size="14.20" textLength="38.94" lengthAdjust="spacing" fill="#ffffff" stroke="#ffffff" stroke-width="0.25">05:00</text><text transform="translate(602.82,238.70) scale(1.0,1)" font-size="14.20" textLength="38.94" lengthAdjust="spacing" fill="#ffffff" stroke="#ffffff" stroke-width="0.25">05:30</text><text transform="translate(658.01,238.70) scale(1.0,1)" font-size="14.20" textLength="38.04" lengthAdjust="spacing" fill="#ffffff" stroke="#ffffff" stroke-width="0.25">06:00</text><text transform="translate(712.29,238.70) scale(1.0,1)" font-size="14.20" textLength="38.94" lengthAdjust="spacing" fill="#ffffff" stroke="#ffffff" stroke-width="0.25">06:30</text><text transform="translate(766.58,238.70) scale(1.0,1)" font-size="14.20" textLength="38.94" lengthAdjust="spacing" fill="#ffffff" stroke="#ffffff" stroke-width="0.25">07:00</text><text transform="translate(118.08,238.70) scale(0.9,1)" font-size="14.20" textLength="71.51" lengthAdjust="spacing" fill="#ffffff" stroke="#ffffff" stroke-width="0.25">GMT(min)</text><text transform="translate(175.60,225.00) scale(0.7838133612186917,1)" font-size="14.06" textLength="16.46" lengthAdjust="spacing" fill="#ffffff" stroke="#ffffff" stroke-width="0.25">10</text><text x="192.00" y="217.30" font-size="8.99" text-anchor="middle" fill="#ffffff" stroke="#ffffff" stroke-width="0.25">0</text><text transform="translate(175.60,155.50) scale(0.7838133612186917,1)" font-size="14.06" textLength="16.46" lengthAdjust="spacing" fill="#ffffff" stroke="#ffffff" stroke-width="0.25">10</text><text x="192.60" y="147.80" font-size="8.99" text-anchor="middle" fill="#ffffff" stroke="#ffffff" stroke-width="0.25">1</text><text transform="translate(175.60,86.00) scale(0.7838133612186904,1)" font-size="14.06" textLength="16.46" lengthAdjust="spacing" fill="#ffffff" stroke="#ffffff" stroke-width="0.25">10</text><text x="192.00" y="78.30" font-size="8.99" text-anchor="middle" fill="#ffffff" stroke="#ffffff" stroke-width="0.25">2</text><text transform="translate(851.10,59.70) scale(0.8233719512195112,1)" font-size="17.83" textLength="38.18" lengthAdjust="spacing" fill="#ffffff" stroke="#ffffff" stroke-width="0.25">DEF</text><text transform="translate(894.08,82.60) scale(0.7703694526242679,1)" font-size="18.41" textLength="23.18" lengthAdjust="spacing" fill="#ffffff" stroke="#ffffff" stroke-width="0.25">10</text><text x="924.65" y="72.80" font-size="9.86" text-anchor="middle" fill="#ffffff" stroke="#ffffff" stroke-width="0.25">3</text><text transform="translate(894.08,124.93) scale(0.7703694526242679,1)" font-size="18.41" textLength="23.18" lengthAdjust="spacing" fill="#ffffff" stroke="#ffffff" stroke-width="0.25">10</text><text x="924.65" y="115.13" font-size="9.86" text-anchor="middle" fill="#ffffff" stroke="#ffffff" stroke-width="0.25">4</text><text transform="translate(894.08,167.27) scale(0.7703694526242679,1)" font-size="18.41" textLength="23.18" lengthAdjust="spacing" fill="#ffffff" stroke="#ffffff" stroke-width="0.25">10</text><text x="924.65" y="157.47" font-size="9.86" text-anchor="middle" fill="#ffffff" stroke="#ffffff" stroke-width="0.25">5</text><text transform="translate(894.08,209.60) scale(0.7703694526242679,1)" font-size="18.41" textLength="23.18" lengthAdjust="spacing" fill="#ffffff" stroke="#ffffff" stroke-width="0.25">10</text><text x="924.65" y="199.80" font-size="9.86" text-anchor="middle" fill="#ffffff" stroke="#ffffff" stroke-width="0.25">6</text><text transform="translate(221.02,467.90) scale(1.0,1)" font-size="14.20" textLength="38.94" lengthAdjust="spacing" fill="#ffffff" stroke="#ffffff" stroke-width="0.25">02:00</text><text transform="translate(275.31,467.90) scale(1.0,1)" font-size="14.20" textLength="38.94" lengthAdjust="spacing" fill="#ffffff" stroke="#ffffff" stroke-width="0.25">02:30</text><text transform="translate(330.49,467.90) scale(1.0,1)" font-size="14.20" textLength="38.04" lengthAdjust="spacing" fill="#ffffff" stroke="#ffffff" stroke-width="0.25">03:00</text><text transform="translate(384.78,467.90) scale(1.0,1)" font-size="14.20" textLength="38.94" lengthAdjust="spacing" fill="#ffffff" stroke="#ffffff" stroke-width="0.25">03:30</text><text transform="translate(439.06,467.90) scale(1.0,1)" font-size="14.20" textLength="38.94" lengthAdjust="spacing" fill="#ffffff" stroke="#ffffff" stroke-width="0.25">04:00</text><text transform="translate(494.25,467.90) scale(1.0,1)" font-size="14.20" textLength="38.04" lengthAdjust="spacing" fill="#ffffff" stroke="#ffffff" stroke-width="0.25">04:30</text><text transform="translate(548.54,467.90) scale(1.0,1)" font-size="14.20" textLength="38.94" lengthAdjust="spacing" fill="#ffffff" stroke="#ffffff" stroke-width="0.25">05:00</text><text transform="translate(602.82,467.90) scale(1.0,1)" font-size="14.20" textLength="38.94" lengthAdjust="spacing" fill="#ffffff" stroke="#ffffff" stroke-width="0.25">05:30</text><text transform="translate(658.01,467.90) scale(1.0,1)" font-size="14.20" textLength="38.04" lengthAdjust="spacing" fill="#ffffff" stroke="#ffffff" stroke-width="0.25">06:00</text><text transform="translate(712.29,467.90) scale(1.0,1)" font-size="14.20" textLength="38.94" lengthAdjust="spacing" fill="#ffffff" stroke="#ffffff" stroke-width="0.25">06:30</text><text transform="translate(766.58,467.90) scale(1.0,1)" font-size="14.20" textLength="38.94" lengthAdjust="spacing" fill="#ffffff" stroke="#ffffff" stroke-width="0.25">07:00</text><text transform="translate(118.08,467.90) scale(0.9,1)" font-size="14.20" textLength="71.51" lengthAdjust="spacing" fill="#ffffff" stroke="#ffffff" stroke-width="0.25">GMT(min)</text><text transform="translate(74.06,268.72) scale(0.9,1)" font-size="13.62" textLength="143.29" lengthAdjust="spacing" fill="#ffffff" stroke="#ffffff" stroke-width="0.25">ELS−11 Pitch Angle</text><text transform="translate(69.60,286.35) scale(0.9,1)" font-size="13.62" textLength="148.24" lengthAdjust="spacing" fill="#ffffff" stroke="#ffffff" stroke-width="0.25">ELS−10 Pitch Angle</text><text transform="translate(67.06,303.99) scale(0.9,1)" font-size="13.62" textLength="151.07" lengthAdjust="spacing" fill="#ffffff" stroke="#ffffff" stroke-width="0.25">ELS−09 Pitch Angle</text><text transform="translate(67.06,321.63) scale(0.9,1)" font-size="13.62" textLength="151.07" lengthAdjust="spacing" fill="#ffffff" stroke="#ffffff" stroke-width="0.25">ELS−08 Pitch Angle</text><text transform="translate(67.06,339.26) scale(0.9,1)" font-size="13.62" textLength="151.07" lengthAdjust="spacing" fill="#ffffff" stroke="#ffffff" stroke-width="0.25">ELS−07 Pitch Angle</text><text transform="translate(67.06,356.90) scale(0.9,1)" font-size="13.62" textLength="151.07" lengthAdjust="spacing" fill="#ffffff" stroke="#ffffff" stroke-width="0.25">ELS−06 Pitch Angle</text><text transform="translate(67.06,374.54) scale(0.9,1)" font-size="13.62" textLength="151.07" lengthAdjust="spacing" fill="#ffffff" stroke="#ffffff" stroke-width="0.25">ELS−05 Pitch Angle</text><text transform="translate(67.06,392.17) scale(0.9,1)" font-size="13.62" textLength="151.07" lengthAdjust="spacing" fill="#ffffff" stroke="#ffffff" stroke-width="0.25">ELS−04 Pitch Angle</text><text transform="translate(67.06,409.81) scale(0.9,1)" font-size="13.62" textLength="151.07" lengthAdjust="spacing" fill="#ffffff" stroke="#ffffff" stroke-width="0.25">ELS−03 Pitch Angle</text><text transform="translate(67.06,427.45) scale(0.9,1)" font-size="13.62" textLength="151.07" lengthAdjust="spacing" fill="#ffffff" stroke="#ffffff" stroke-width="0.25">ELS−02 Pitch Angle</text><text transform="translate(70.10,445.08) scale(0.9,1)" font-size="13.62" textLength="147.69" lengthAdjust="spacing" fill="#ffffff" stroke="#ffffff" stroke-width="0.25">ELS−01 Pitch Angle</text><text transform="translate(851.10,257.50) scale(0.9,1)" font-size="17.10" textLength="35.89" lengthAdjust="spacing" fill="#ffffff" stroke="#ffffff" stroke-width="0.25">Deg</text><text transform="translate(894.08,280.80) scale(0.9092348811881859,1)" font-size="17.54" textLength="31.78" lengthAdjust="spacing" fill="#ffffff" stroke="#ffffff" stroke-width="0.25">180</text><text transform="translate(894.08,319.30) scale(0.9092348811881859,1)" font-size="17.54" textLength="31.78" lengthAdjust="spacing" fill="#ffffff" stroke="#ffffff" stroke-width="0.25">135</text><text transform="translate(894.08,357.80) scale(0.9011167126061486,1)" font-size="17.54" textLength="21.53" lengthAdjust="spacing" fill="#ffffff" stroke="#ffffff" stroke-width="0.25">90</text><text transform="translate(894.98,396.30) scale(0.9011167126061486,1)" font-size="17.54" textLength="20.53" lengthAdjust="spacing" fill="#ffffff" stroke="#ffffff" stroke-width="0.25">45</text><text x="899.30" y="434.80" font-size="17.54" text-anchor="middle" fill="#ffffff" stroke="#ffffff" stroke-width="0.25">0</text><text transform="translate(221.02,696.90) scale(1.0,1)" font-size="14.20" textLength="38.94" lengthAdjust="spacing" fill="#ffffff" stroke="#ffffff" stroke-width="0.25">02:00</text><text transform="translate(275.31,696.90) scale(1.0,1)" font-size="14.20" textLength="38.94" lengthAdjust="spacing" fill="#ffffff" stroke="#ffffff" stroke-width="0.25">02:30</text><text transform="translate(330.49,696.90) scale(1.0,1)" font-size="14.20" textLength="38.04" lengthAdjust="spacing" fill="#ffffff" stroke="#ffffff" stroke-width="0.25">03:00</text><text transform="translate(384.78,696.90) scale(1.0,1)" font-size="14.20" textLength="38.94" lengthAdjust="spacing" fill="#ffffff" stroke="#ffffff" stroke-width="0.25">03:30</text><text transform="translate(439.06,696.90) scale(1.0,1)" font-size="14.20" textLength="38.94" lengthAdjust="spacing" fill="#ffffff" stroke="#ffffff" stroke-width="0.25">04:00</text><text transform="translate(494.25,696.90) scale(1.0,1)" font-size="14.20" textLength="38.04" lengthAdjust="spacing" fill="#ffffff" stroke="#ffffff" stroke-width="0.25">04:30</text><text transform="translate(548.54,696.90) scale(1.0,1)" font-size="14.20" textLength="38.94" lengthAdjust="spacing" fill="#ffffff" stroke="#ffffff" stroke-width="0.25">05:00</text><text transform="translate(602.82,696.90) scale(1.0,1)" font-size="14.20" textLength="38.94" lengthAdjust="spacing" fill="#ffffff" stroke="#ffffff" stroke-width="0.25">05:30</text><text transform="translate(658.01,696.90) scale(1.0,1)" font-size="14.20" textLength="38.04" lengthAdjust="spacing" fill="#ffffff" stroke="#ffffff" stroke-width="0.25">06:00</text><text transform="translate(712.29,696.90) scale(1.0,1)" font-size="14.20" textLength="38.94" lengthAdjust="spacing" fill="#ffffff" stroke="#ffffff" stroke-width="0.25">06:30</text><text transform="translate(766.58,696.90) scale(1.0,1)" font-size="14.20" textLength="38.94" lengthAdjust="spacing" fill="#ffffff" stroke="#ffffff" stroke-width="0.25">07:00</text><text transform="translate(118.08,696.90) scale(0.9,1)" font-size="14.20" textLength="71.51" lengthAdjust="spacing" fill="#ffffff" stroke="#ffffff" stroke-width="0.25">GMT(min)</text><text x="190.50" y="506.50" font-size="14.78" text-anchor="middle" fill="#ffffff" stroke="#ffffff" stroke-width="0.25">4</text><text x="190.50" y="541.90" font-size="14.78" text-anchor="middle" fill="#ffffff" stroke="#ffffff" stroke-width="0.25">3</text><text x="190.50" y="577.30" font-size="14.78" text-anchor="middle" fill="#ffffff" stroke="#ffffff" stroke-width="0.25">2</text><text x="191.85" y="612.70" font-size="14.20" text-anchor="middle" fill="#ffffff" stroke="#ffffff" stroke-width="0.25">1</text><text x="190.50" y="648.10" font-size="14.78" text-anchor="middle" fill="#ffffff" stroke="#ffffff" stroke-width="0.25">0</text><text transform="translate(180.06,683.20) scale(0.7665616006578009,1)" font-size="14.78" textLength="18.21" lengthAdjust="spacing" fill="#ffffff" stroke="#ffffff" stroke-width="0.25">−1</text><text transform="translate(845.06,505.90) scale(0.987089200962481,1)" font-size="14.35" textLength="55.19" lengthAdjust="spacing" fill="#ffffff" stroke="#ffffff" stroke-width="0.25">1.0e+04</text><text transform="translate(846.52,541.30) scale(1.0,1)" font-size="14.35" textLength="56.02" lengthAdjust="spacing" fill="#ffffff" stroke="#ffffff" stroke-width="0.25">6.0e+03</text><text transform="translate(846.52,576.70) scale(1.0,1)" font-size="14.35" textLength="56.02" lengthAdjust="spacing" fill="#ffffff" stroke="#ffffff" stroke-width="0.25">2.0e+03</text><text transform="translate(846.08,612.10) scale(1.0,1)" font-size="14.35" textLength="67.46" lengthAdjust="spacing" fill="#ffffff" stroke="#ffffff" stroke-width="0.25">−2.0e+03</text><text transform="translate(846.08,647.50) scale(1.0,1)" font-size="14.35" textLength="67.46" lengthAdjust="spacing" fill="#ffffff" stroke="#ffffff" stroke-width="0.25">−6.0e+03</text><text transform="translate(846.08,682.90) scale(1.0,1)" font-size="14.35" textLength="64.94" lengthAdjust="spacing" fill="#ffffff" stroke="#ffffff" stroke-width="0.25">−1.0e+04</text><text transform="translate(211.54,492.00) scale(0.9,1)" font-size="18.12" textLength="264.84" lengthAdjust="spacing" fill="#ffffff" stroke="#ffffff" stroke-width="0.25">SAF_BXuT/Data Quality (L)</text><text transform="translate(529.20,492.00) scale(0.9,1)" font-size="18.12" textLength="335.16" lengthAdjust="spacing" fill="#00ff00" stroke="#00ff00" stroke-width="0.25">MEXORBMC/SPF X, Spacecraft (R)</text><g transform="translate(70.0,139.6) rotate(-90)"><text x="-65.0" y="0" font-size="17.39" textLength="130.0" fill="#fff" stroke="#fff" stroke-width="0.25">Electron Energy</text></g><g transform="translate(89.0,140.2) rotate(-90)"><text x="-15.8" y="0" font-size="16.67" textLength="31.6" fill="#fff" stroke="#fff" stroke-width="0.25">(eV)</text></g><g transform="translate(70.0,589.6) rotate(-90)"><text x="-71.8" y="0" font-size="17.39" textLength="143.7" fill="#fff" stroke="#fff" stroke-width="0.25">Raw Data Quality</text></g><g transform="translate(89.0,589.5) rotate(-90)"><text x="-23.5" y="0" font-size="16.67" textLength="47.0" fill="#fff" stroke="#fff" stroke-width="0.25">(Raw)</text></g><g transform="translate(969.5,589.2) rotate(90)"><text x="-85.4" y="0" font-size="17.39" textLength="170.8" fill="#fff" stroke="#fff" stroke-width="0.25">Component Distance</text></g><g transform="translate(951.0,590.0) rotate(90)"><text x="-20.0" y="0" font-size="16.67" textLength="40.0" fill="#fff" stroke="#fff" stroke-width="0.25">(km)</text></g>
</svg>
</div>
<script>
(function(){
var c=document.getElementById('c'); if(!c||!c.getContext) return;
var g=c.getContext('2d');
var B=[[211, 128, "KKLMFFGGRPMLPMQPQQRRQOJLMMMIIGEKJLMNKLJNEGKKPNQOONIJJGTRRPSSTOJJOQONNSNOROQLLOLMMOMMKJSOOXXNNLOKNJOLIIKMPJNOKFNNLJJMLLKLPPHMJVKLQQLOHKMNILSRIDNQOQJFNLMOPPQMNOMNNMMLLQJKLPMMMIONUSNQJJPQMMLMLLEGNQJLIMFIKJJIRVTRPNQQNJKHQVZNMMOLROIIHHKJOIKIRNPRLHNPQPTQSSJNIUKDNRGKMPQPQPOMSQKJPPPPKJOQQQJJOQILFHLLMQQPKOMMRNLNNQNOMJLNKJKLTMMNLMMPLRNPOLPMKMQSOPKJMJNNQWXIRQYWKGONNKMMJHJIPLMKRQKLLKXYMMHNHWPIQOLNKIMOXWRQDCONGMRSMJSTTSQNONKLOOSTPPMNPRMMPOJKLJJNCARPOONOQNNONOHFPPMOVTUTTXOKIKRPPMTSRacLKIMMNKNMOMKMQMNJQNOOLJJLSRNOSRMOGXMGPPLNMQJJNOOMUPFHPPMNOLIIQQTSMOLLMOMLNQNNHKNPMOQPPMLLQNSTTSOSPLKLMPQQPRJJQQKJPROLLOOMONOMVciUKKUTOJNKOKFHTPNKNKMMKFKORPILQNLQLZGHKOKLNOJLOOTPTPPOLMQQIFMOLPUTOQJMLNGGPPRTJMORPRHIQPPUMMNORRHJPKQPKKRSNOFIMQNJSVONVVOMQMTRTbhTTOPKKHTOQPJKRMLHLJIMPLNPKMSQTUMPLXLHLOMNLMROKNVQOKMQHKPOSRORSTIHKKJLILRUMOOQNPMLNOKLQOMRNMSRKJLMOMIMMNVRPUORSPNNVZSTXVWVPOXUWfiVSRRMSMKJLKMNOJKFLEJMOOJLPOTTQSPVHWMEMNILQOHJTVSOKGPTSTLMQQGJSTJJPQFGCGPQWTKOOQMMOMQQTUJMRNQRKKTVWUILRUNQOOSTURQPXbZZaYRQPOcbWeiURMPKMJTTLKMMOMRPLHOQLLQRRPOQRPJMMVIHLNNPOQVUQORRUQJIIHMKNNUYPRSPONDFFHSROQLKQSJIRSSQOOKNRMMMSTLNRNMOLONLLPIJUNPMVbXZfcXVSSgdgokYWQRMQMNNSSLNPONNPLSSUQOPTTXZXSNPIYJGKMOPJKLLTSPOPKONKPZTJNMNZXOMSUQTOMMKPPSSPTPPRUTSOMSVPLPQROVXTPIJOQQOMRORMKUTUabbcaZZbZgddlnXZUTPSORPLOMMROIHWTPPQMWXWUVTSSGPMaLOLMSSKKMNTTQNUONONLNNJLIMOORONOEHXXOOLMUWRTLNLKNMWWOQNKSRUTNLPLMLXYYXSVPPWSKKZgcdecbZcaifhoqcbWTPTOWTLKDGONYURNTXVTTUaXUWXWNUGXGITPRRSRTSSScYQPWTYWUWQOTUZXSRRPORLPVVOPLNOSJNPMRPRQTUNKUTUUUVUQQRQTQTTYNRXVUSehggklecedhgkqrefcTRQKVRKMRPPKNLTQZeWSWXceUUWSQQKUEHXXKNYXXXVWVWZWTTRNWYMMSSUTTSSTNNVZQSVULOPURTUURRQQOSRQWVQQMNQOTSRSSQTXUUZWTUfkhihghgffjhlstfgfYSWQRRPRSSPOTOVUbeZXaZcbbbebSUFVLHTUVVRRWWTRWSSQUSNOffRRTVXZUTVXPOSVWVWWTVQSRRRQWWYZVYPNOPXVTSTPUUVXTTRTUXXVYZkphjlkhfijoklssehgXTTORNYYSUUSPMSUdhUSbaffcdheTXkaVGSUSTWZXWaaaVSPcaWZghSQSTUWYUaZVXRSZYXWVXXXXaaXbVddWXZWaZWWYYURXaYYYXWXWbZYYZlphhkjjhlmnkmsvhiihcVSbZUTTUZTZWWVbdgcdejigiieWYiXaGWXUXVXZabbheaXccVVdcWVZcacbZbdZaUWaZWZZZVYcbbZbYcbYaaXcefgZaVUddcdcaYcZbebcflokkghiillpmktwkkjgbfaYbZYZXYUaXdaegecdfhhffkhWZjTZHZaXZWWdbdfheYXffYVgfWYZbcefcbbabbaaabcaYchcdgfbbikdgdaehhgfhgccccdYVaeefgffhjnijmljhkjpkiqtghhfacXcaZYXXjeaXeadfedceifgiieafiXfIgeZcccdeijfcedhhddhfccbcceebhhadYahhgigiceegffhfigdegdfgeecgeZffhgjgeidhgeiimpmnmmkinqqnmuughhhdfbfebbYcZYcbhdfhifhjihjkjifhlUgHddbdacjjhigffdkkbdiicbdfghkieedfgghhefefacfgkhfdfgfigeghjjfggccdijhhhlhkjhhiilfgmljiikqmlsuhjjeckgjibeadhdgdhccdkhfghgiiljcfoVjJhhfeceabjkkhjhfgdfjjbcffegkheghidegfijfhhihihgcbjkgigebdhgjjheijijkkjmikheljlojjljfdjjpkirpdjhhgifhghgcclffdiefijgfggdihkjglpWiHiidehigfghjhjghidbjjgfgihjmjhihkfikkabklikikkjhfmlfkjgcdkkikfbjkdhkjgjhjmkljkllnnnhfkmqlnvselkkfjihfgecdmklhgcghmhijjgfhnlfjpViIjjcajjjllngbjghihilljiikghlijleffgihaaikgicelidbhijklibdhijlkijjehljknfikikjjmijliedhiplmupbnmkgnlgffgginjnjhdegffddhgikkihmmYmKffZZfhcbijfbifjjfejihghjefkhgfdgdelmeeiihkbdggaaijjmjiccffihlheedehffhfiifhgkmhijiebkkrnjqlYllgcnkfeigXXojnkcZcdkhfgdcfgjhfjlXlJggacdfdeijdbkhfgdcjhjjgjddjgeheedfjkcdgjfidccbaaihikjgbceefhmhdgcdiffibfhchifideihcbgholfnqfiifdjhfdffaakglihdbcfcdeecfgjhejlWhHbacdcccbeeZXfbhgbbeedcegbcfccdZcYbghbcefgiabecaXeeegfcYadccdjgcfabedehZceaeehjffgfbaefnjhpkYiiebkjcaaZYZhdjhcXYbecacbcdgljagjXeHZaZaZaZZdgYVdbecYaeeecbeffbYccXaXZefaaefZbZbcaddaaegbZabcacddbXaYafeZeYcgdbacgacgfecZYfdgnobabcbhfaYcbYZhdgedXYadbabYYZaggcghYcJaabdaaYYcdbZcYZabddcaZZabccYcbXYccdcZZXYXaVWcbbZddadbYdgcbbcdZXYcdecdgbegdedceabddYXaYcbdnmXaZbZheYXYYXZbZfccYWYcZbbZYbcgfZdiUdLZYYbZaWXbcbZcZXaaaddaZZbefbXabWZbcbbXYacXaYZcaWVZYZbbYZZfedbaYaZcdcaUXZZdaedXacbbcbbaXabdbbVccaXdZaYYXWZfaaWXUWZeaacbbebcaXcZZaHYYUTSTUWZaaZcbbbVUWUYYZaXXYVXWWaWXaaaaZZXZZcXWVTaZaeZWZbYXabYUYaYZaZZdZaZXbZXZZYegZYZYaYbZYUbZXWbXZXYWSTdaaWYTYZZXXZZXXXYUVaZXaHSUQUYXVTVYXWSRcZSTYXVTQUcacWXZUZTUabQQXWVYWXUQTTbZSTONRRYWYbVSXaWXZYYdSVcXSVVZYYWWXTSSZUUVZUUXVUeZOJRQLMYVXTXWTVUQZZXUTVVRUZWUUJTTTSPPTXQQRPURTUUTTTOSPRLMXTPNQTUXVVabORPPQTaXTRPOVYPPQSVXSQSORTSUUUQURRQQONZcVUWbSOTTSRONWRRRSSQMVUVUSSSPQPYURRTTVSPPZaRMSTTRPGRPSQOOMOTSUSTPXYVUSSWUJNNOTQSPTURVQQSSQSKQNPVUONQRMTNOQSJLSTRJOPRSNLZZQQSPLJTVRVRQRQTUQQONaRQRPPaVUQORQPQNQPTNLOSNSRSQTTVXQSVSSHMMOPIHNMabJFURHMPOTVTSJKLJKHOQMJNQRPPPQQMPJJUUJESUJJOMNOOMPNMKHJPRNLQUMNPNQQSVKLQPUQMLNKPOKIEHIHQQQMTPMOLIPQSQLLSOLMQOOSLLRSNLMJJKKLJLJKRSOLKJECJJLLKJEJMLPLQRLQIILQFHOQIJIHMOKKINNRURPOOOLNLGQVJNNNJLLOPNNMHMMKQTIHJIQOKNQKGGOJJGIILLKNJFLGKGJMGESSOLLMNNOSSSLJJKILECFFONFFHGEFFFPIGECCGFQOGGGJIHJMLJBGFIGHNKEEOOFGCANNIGLNJFMNMNNOJPBEFCJIJJJILMFCEEHFFFJEJLNLIEGFONKKMHAAHDHKGCPSKGLMKJEDJGGIDFHIGIIIFEIHGHKMFFHJEDGGIHECDFEIGGEFKJFGMMKJIFEDOSHKGDCFHGHLIHCEJLJIEFHKKGJIHKHIFFHECCJIAAGEJIIGNKHDKMIJFAEAGAGIHGABKGHHIFJNHGLJHFAEHH....BACCIICDKJEFBF..DBCEAA....HGEFBBAADDKE....KGEGFD..AAFFAACEDGEE..IFIIMJMMGGFHEE..IEEFIGAANMBB..........BA....HHHFHK..FCFFBDABGH....DAIHEFHHDCDIGH..DC..DEHGHHGIDH..HGAADCABJGFFHF....BFIHEFJNEHHEEEFI....OL......BAEEDAAAIFGEBG....OJDEHGCEFEEH....EBGJIHFGADEF..IF..GDHHGEHCABHH....HJ..FDCGGG......DBAADE....EDAAFD......ADBF..JICFFEKN..GDFF..LF....IHHFAAAFGA......IGEDDEFFHGAGAAEG..EGIIAB..HD....CEJJCB..IGNH..CB..LMNO..CE..JI....ACAABDFGGIAA..EG..GJEI..IFEJ..IHDDEEJKHFGCBAHDGDMK..CDGA....ABLGJKDBBD..AC..FEHI..EBIGIGEC........BD....FD..GHEFHI....EGGKBCGD..CD....DG....DBBB....AC..BBGH....HEAAHH..LH..GBDC..DCBF..DBECDG..DGFD..LK..DC....DIGHED..IG......FHHE..LIEA..GJIGFGFHHI..GFDC......AAKKEE..EA..EEEA..AAHHMOBH..BAECAAIDCB..........BAAADAED..EG..AAHGAC..EJAAAJ..AA....CF........EH....AB....FDHEGIIJDF..FFEA..LO....FIKFBG..CCHG....FECAEDLPGG..GDKF....FAAAAAMHJK......IDFAAB..GEGD....AD..............BAHDHF..ACDD..DEII......EH..LLEF..IFDCEG..IHDD..........BADE..DCBAMPIHIN....IEII..AAEAAA......HDGB......HH..DE....DF........HG..FCHEAA....AAADEE........GKGGEGGI..AAAA..AA..........GG......BFJF..............FFJD..HC..GGGG..KD..HD..AAGEEC..........DGACAA....GD....FG..............JM..EC............AA............EF..AA..............HF....FBGHEA........EABAEB....AC..GFIF....BH....AC..AC........CC..BB..EA..BD..............BB..EJ........FA..AD....EGFC..JJAABA........AABA........AA........IDGI....KH..HG..JHIL..........CE................................BA................CDAC....DC........DACAGD..EF......DE....CAEC..........GDFL..HJ....CH........BD..........BAGFCH....AA..........CD..............AA....CGCF..DF....GEBA......FG..........DAFADA..HFIL....HG......BCEE..GG..........HFBC..AA......CC..................FE..................DC..AABB..........EADB..........FC..DAFI..........CI..EK"], [673, 155, "IIFGGEIFDFABEFACEFIFKMFIOLTPKJLJKNHMFGOLMMFLIGIJHICGDAMOJJMOOQJGMLEDIIJMHHGHHEPJKGLJJJIHLIRLMKHJLNJIJILJIJLMJKGFIMJODKHMHFDJJKVTKGMKJOIHJMTSLFPJHHDCDDE....GHDGBAJHGHNOFEDGJJGEFFJLJJMHLKLLKKGKHIHIHGNOJKLIHIJLJDFNIJQUIIJINPJMJLNNFCINFERPMJORLLMMGHLGLGKOFHEDMNLLEFGNKOOLFDJNEHLQMIEINJNNFCJFIKJIHLHFCHJGFGBCGDH...EHBDIHHIFFHFJIGCFJLDDJLKKPLUSLKKHNMOSOOKLLNPSKMJHJJFJNGHKORJJNRHJQOHMPPPRROPOIFLKDAMNNPMOGHYUKIOQGFKIPOMNGGILOQECNOFJJOFOPLFIMLLLIELJIGIIJSNLNRNKJIDBJFK....KNACJGMGEJDCHEFFNSNJJHFIJINLKHTNKIJOLLMNGHKNLMNQMJJJLJPRHKOQMRFGTYZbVPNPNPJMNKKHMHJIHKRRLILHRNNQLLLMIIHIONLNLLNKMJGLIKHNJEBHHHLKOKIJJIGEIKGHHHIAPOIHGBB.KL.HIAALHOIJKGJHFFKHJNNGHJMIJLKIKSNRQJKGINPKKLOMJPOMKNNOMAHLOMLKQNNMNRWVRJJKMVUMNKKNNJJFINMIHKFQNMOOMKLLHIMIMLNQPOLJKHOGIJQMKNOOOQTJIOLLNKJGIIKDGKIFEHHCBE.FGBOOJKGFOLNOAEFICGIMIEHGKMFANMRRNKRSRUMNLMNMIORWOMOMMOSPGJJKQOLRIIIPYaWSLKKJJLIGMJPJJJPOHHGIRNNIIJMLKJJGMMACKOCIOKOKJPKNIPKGMQQMNNLJMLPONMLNIGGHJEMKHJGFF.FG.HFGEKKOLMMEEIDKINMRNIKKNHFSSJHSNQQKMJIGIHINQNLKKLJPRKIIMTUJNKLOSNTPSSPEHIHOPIFURSPKKKJLLMNTORQHGKMKIPLLKNRLKQQMJLOOSIJLTTSSXMLMLHFOILPKKOUPNNMGAFFHGBAFH...LOJJKFOIIOLMMJHMJJOKRTOSJIMJRQPMKIQQTRGHMKKKLLMMMKCDMGKQLPIKJMSVMQVXSOLPTPRSNNSLQMLMKONLPQPJPOIMHMTTKIOMOTNMLOMHEDJMIKLUQNGIPOMNSNSQPQJKQUPORQNHIFIKGEIJ..FOOKKMKOJPOJMKHJNMNKGMLIKOPPPQPLIOOQVJJNPNNOQLIQQRPPPVSJONMKLSUMLTWRVVRPRXROPRPPOTPLKMPOLPQTLQNMNQQROOKOQIKNRRTIFSPOSMNNSMJLRSNJJNKJKNNJLLPJIJNMIHILKPOA.KLIOONNSNQLQTSUQMMPSTTQSVIPKGRPRNPNTTKNONMMKMLNMMQNLLGFPNQUQRPSJLOOWZQUZXILYTTSOMPMWRJKSSPQMOXRLLLNKKOOQNHJLPMMNPOLPRNOOSGNMJOSNKURMLQPNOQPQRPRMPIEMJKINIDCNK.SSSUWRYTRRVWRNJMWXQQPPQSLLRPKIRNRPUTSTMOOPORSSSRSOMNPOLOPORRLNILMRWZZXQSURSTPPSMXWIKNNORTSSLURNMMPPQQMNLLKMNLRRPONPRRSMVQNRTQMLHNJKJNPNMNPQQQSOLKNHGIFHIKL.VTWUVTUOSTWZQOSXYZVUVWUXSQTRQOWUVXVYSQOQUSQSVTWVQMOPIGOSUVNQMNMNUYZeaVOQYSVXSPVPROMLTSUTTRUNRNPSNPSRPQRQMQPTNSNISTLPKNJPMKMSWVSTRPPKMPPQJPMJLNQKLNMIGEDJNN.WVXZYTWSTTYbVWSUVVZYWWSYQMbYUSZTbZdfTTVUXYYaMMPQMJNPMIJOWWORHLRRTVYdfaPRWTWZUQZUWTQQUURTRSOMQMNQNOSOOMMPMNQRTVPNOOOQRRLRROORSRMJNLWUJORULQRPRQKEPMECLHFHNMOccZZaWZTVXYaQPOQZabZWXWYPObYURcXcafgbZWVUUVWSSTTRQNMQOPRTVVWSUTVQVZehdOTcWZaYXaXURUVUXVSRPbUXRSWSQTRSOSVQSPSRQNHWWUXLNOVQRMQSQWVNLSSPRLMVZSUNRQNOQNNTQOSSPRbbabZWdYadbdedTVdbdbbccdYWaXbbfbgebecdYaaXbdPPTUUTQQSNQVRTSSQTOPZadhkfSWhcdfWVccdZXXYYYYTQaUbWXWTRYXVRTVRRMQUUSOWUYcUVSWSPPTRPVUQPRNVYSTTWUTUWUTSUSTQPOQaYSggabcbhdadbeeeWXcfhdfhbeXWihbbfahfgjZZaabZacWVYVZWXXROPTXZVZMPTVTYgkmgVZhbcfdbeZdZYZegaaYYaTcZYZYWXXTRWWUWTTWXVTVTXZUVMVVSMQYXSSYUWVXZQQTXTQPRQQPRSSURXYTTQhfffcajeZcbefddfijhedefgcbighfieiigieefffeddURbaXVcaaXVZddXZTUVXZegkmhbcmecebZfbedaaccaaaYcYaXXZQTZYWSVUSVZabcbZUVUYVXOWXTPRWTYWSQXVUXVVTYTSTUTTSRaYXVUXWWShfcdigkgcghkgebedfgfgigjcbghhdiehgilhhdeeeegaYaZdbVVVTTYbcceRVbcdgjojfTWhbhidcfcfcbcdfjgcddZfaccbaeccYZaSWWYXaYVVVabYaSYWTUXWUUTWTYYYZUSXaZXVWYXZXbZXTXYaZUighgdclggjdgfdbdhiecfhdhechfhhhdggjlhifgebfebYbaZXUVXUXZcdceXaZaejgkmjceidffhgfchfcbghZabcjbigdfaaabdZTVVZUYYYZVVWZbXYVaZVSWSUWWURbZRWZYZbaaVZbbZZXXZXYZedbeecdfeicgifhfdcegigdfhklgejiifiejjijigeggfdfebedebWXWTTWdebcXZbbcgjnkifhnicffdgbfceeffddffnhiddfffedaYaaVYVYbcYUaZZcVYSYYUTXXWXWYWYXZbbZadYWcdWZfdaafdbdedbgegggfkgghgiigcdjkkidefhkhjjhggejjhighghffcgcZdddbZZYTZdegbeXZbcdimpmicfkfefbbfcfbdegilkffjdmhdefgeddbYZXZVWZZZWXYVZXZRXXTQUYVWXWVZWbdYXXccbdfabddigfdcbcccdcgghekffjcgifehdfjiehhkgdkilkiegfhkffhiecefcabbcZZZaXZdbecdacYagjnsmgcfjcddcchcecbdfhfehgmglgfideeccaWZYaVYZbaWXUYbZaTZYWVZaXZaVSZXadXWXcbbbdbbeegfifhihgggfffkijdehbcgfaecegfefhkihhhhfjfhhgjghefggghZYdccbcbaYXbcdZcbeaagioqlgcdicdfccgefddcghhfhhkfhdhjgfbabYZaYbadacZXYZWZWXTZZWUZaXWXYWbbZbZYZefdYbcdeehikgedihffedffckgehYahgdhcciffghkfciiifhdghgjefiiccegaaaacZZaYVaedebdYcbafklpnjdgkedfdajfcZdcceedfgjdkgefbbedYWYZVYXZZaZWYYVZTUUcXVTWZXZaZXbYadabafbbbffggghheceelidedffheidefWZjhbecefbZbcegdhgfehdgffjbbeeedcfYYcZbYZZXSadceadYbXYfjmqkgacjeghaZgcecbcdehifgkfeZdebccabZWWUXYaWZZUWXWZUWVcYUTWZYYYYVaXacbbbfggcedeggfdgdachhgaYabdahdcfYagfbdXYdabcijcYfegfifdcfhcbfgdeZdYXYXcaUVYUWZbdYbXcabdhmpfcbehbegaZdaeaZZabbafgkgebdedeedZWacSTSWZbaWYYZcVZSYbXTXYWaaZWaZbebbaefdZaddeegfjhefggeZYZabaebYaUUgeYaVXdaXYehdcigcadZfeceXXefZbWYYXXVXUVWSOWaYaYaXZWYadlokfXaeZabXVgdZVYYWXZXZZgZdYabZadbZWWWTWWYUXXTTUVXWZVbZVSVZVXXbZcbacZZZdgfcddfffjhhfhhgfeUTYYXWaWacSVbaWZPRZWWYabXUfeYXcXZZceVWcdaaYZVUVUXVWWURRWVWVXUVTRVXakZXXYVWYZVVZVYUVVVXVVZZhaeaWZZYYXTRTUQSTVUWWTTSUWUVUZWTRVbZXYXUZYXYXXZdccaccdgfgfgebbhgfUTSTVRaWSUPTXWRURTaXSTWaWUYYWVWTYXYaSSWYWXTWTSRRYTSTPMOSUVRTRVNNTVajWWTTURUVRQZVTQRSQTVUUTdXYVSUVVWWUQSSORORQSURRRQURSTZURRUXWWWVSYXXZaZZcbdZcdebbiiebbcfebSUONTOXSRTIJQSOQOOVUOQWaUTXWUSZSYWUXOPVWSSOTSSONPNLJMMPTRRQTRTNOUSWfWWQSSQYaSNUOVQPPNPRPONZVWVSUVWVWRROPLNQRORUQNOORQTOWWTPSWTWYXWaXZbXXWZZZaccfddddfecceebTRNNROOJSTRSVTKNQSSNMMSRSOVSSQRNUUORLMUZPSMOQORQPLMMMJPTRQNSSUNOUTWfTOQQSSUTMMRNPMNLKJRSYYYSUSPQSSPOMLPOFGINSWSPPNNSGINUSQQSUTUVRPUSZaWWVZcdZcceffggfdbbbbbPPLLWUNJMQIPOLNQLNRRTWPQNNRNUSTNSSPRMMSVTUKOKKNNOMOPSOMOKORUTSIIMNNZOMLLRRRQJKPORNGFOSLLIKZSIEQQQUOOSNNMIJMNKNMKMMWYPTMQMJFKRPNPRQVTXYXXTYbbWYdccdgefdaacbfIHMOLGRNKOLMMJINRSSMNRKMMLQQJIUNOOLQPRLLPOGLHHQQROEGMIPTLOILKPLMMJNVNMLMKMMPOMQNJGPQQNNKLMRKNMLRRONNLJFHNQILHKFCPOJOIOHNMLIIPMUUOMQPTWVUTWYXUXZecaaaebabYYZJJBEECURIJJLMLKNMOOLEIGJLMKIPOPIRPJJQRILLLEGNNNLQNKJRLDGKLGGINNNPNJUIIIJLIGIJKLIOJDFOMJIJLYVAALLNKOOLKHLFFGJKPHDOMJKKLINOLENSPQRPKTRPRTSRVVWWXWZYXdbYXZZbZUMLDFNMMIKOOPJGBCGFLILLKLKJNLIGLIFGCDFGGIKNJNGGPKOMEGSJFMHJGLLMJJEFOXMJFFIHLMPNRRFCGEIIKLNKRMLFNTMMEFNIGIBEFKLPIHEFFKHHDNNKDHKKMMOLQOMPPOOSYWSURSURaZXVRRaYULLLLECFCDHFFJFHJIKIJFGIJJGNLIHFCMKJKJJEFKJEJIDIGCCHIMJAFEGKNCFHGDFFGJKCCCCBCJGIGIDGHFFJKIIJFJFLOGFIGIFAAFGACJHGBGIINHLCJJHBBLJNKKHPOKMJINRPMRSQPPPTTQPQSUTNIEBDAAMIGI....CGKLKFEFABNLCB....FFAA..BCHIDGKJKI..GFMHHJJJ..CFAAAAAC..BCGCDE..KHMJAA..GEBCHCKI....FELIEEDIACDHEBHH..AADMJEABEEMKGDJKJKDCLQJKNOLMNLTTLILKQSREDFF......BEMJBG..JGBCGHAABBIEFCEHGGMJFCEF..JI..FDFGEBAECGFLHI..EDJLDC....FEAA....HIEE..HJMFKI..CCEFJF......BECA..GLAAAD....IHCEFCECIJIHKONMKNIHJHQPFEFGOLLHJ..CAJECEAADAAAEGFCBCCE..IKAALIEE....CG....AAIJGD..AACGHJAAAAGECA....AAGF....AAGGACCD....NEJDAADFDG......ADCFDBDGFJ..AF..ACHIAAHDGF..GGBFGFCCGIFFOMHFFGNLACB..CAHDDIEIHG..CDECBCFFAB..AA..HGAC......AADB..HCECAAAF..IHCE....DFGGCCAA....EBGADD......LE..HJCB..BBDGADBEJKFBCC....BJCAGK..FBEAMHILEB..HJ..HG..LLAAADIKDAA..FC..DGBAAAAAFH..AEGI..GG..JF....EE..EGAB....NJAB....FG..DD....CIEGCE..BE......CBCC....GB..HJ....FF..DFCE..JD....AG..GEAC....AAGGHKHGDF..FI..GEKK...........EFED..CGDAAB..DACEHIEFFC....IHDG..LJCCJM......AA..AADD..DG......ED......ECEAGB..CEEB....MIJK....AABCAABBIJ..EF..AEAK....FBHHAABA......OJ..FE..IHJF....E......AAAAEH....FIGA..EG..ED..CAFFKLHI......AAHKHFABJE..ACCDBECC..DE..AB....HEHE......FCEC..CE....HIIFAA....GDBA....AC....ACGEFEAA........DDAD..........KHFCA....AA....AAFGGL......CAGB................LL....FE........GGDDED....AA....AAICIH........GD..DEABBA..........MH......AI....GG..GFBA..ABGH....IG..........A..............AA....AB..FA......CD..........DAEG......GKEIEE....IEBE....CDCD..FC....BC..AA....LK..HHGC....AA....HG......EA......AAGBDE....FDAAFF......AA...EA..AA..HJ............CG......EAFD....DC..ABDF........AB..AE....BA..AA..CFAAFAIG..AB..DE..MI............ABAA..AAAAAD....GCFJ........AA......GI..EE..DB.......BCGB....BD....EE....CE..HE..GD......AC..........BB............ACBEEF....BB....DAABCDDCCDFAGA..........AA....IEMM....DO..ACIFECKE..AADF..................I....AA......DD..........CA..AA..EC....EG..DJ..........AB..BB..AA........CC............AA......JLFFAA....HJ..........................DGGD..ED............EF...............DF......AABC....BA......DD..ABGH..KIAB......ACAG....ABBA....EG........BBDDEE....BA........................HD..........EH..JKAA.....................AA..CE................HD................FE............DF..........BA..........BD......GBEJ........AA....AACE....BH..DG........HG....................."]];
var A="ABCDEFGHIJKLMNOPQRSTUVWXYZabcdefghijklmnopqrstuvwxyz0123456789+/";
var st=[[0,128,0,255],[0.2,0,0,255],[0.4,0,255,255],[0.6,0,255,0],[0.8,255,255,0],[1,255,0,0]];
var pal=[];
for(var k=0;k<64;k++){var v=k/63,i=1;while(i<5&&v>st[i][0])i++;var a=st[i-1],b=st[i],t=(v-a[0])/(b[0]-a[0]);
 pal.push('rgb('+Math.round(a[1]+t*(b[1]-a[1]))+','+Math.round(a[2]+t*(b[2]-a[2]))+','+Math.round(a[3]+t*(b[3]-a[3]))+')');}
for(var n=0;n<B.length;n++){var x0=B[n][0],w=B[n][1],s=B[n][2];
 for(var r=0;r<50;r++){var y=70+r*3;
  for(var cc=0;cc<w;cc++){var ch=s.charAt(r*w+cc);
   g.fillStyle= ch=='.'?'#000':pal[A.indexOf(ch)];
   g.fillRect(x0+cc,y,1,3);}}}
})();

</script>
</body></html>
